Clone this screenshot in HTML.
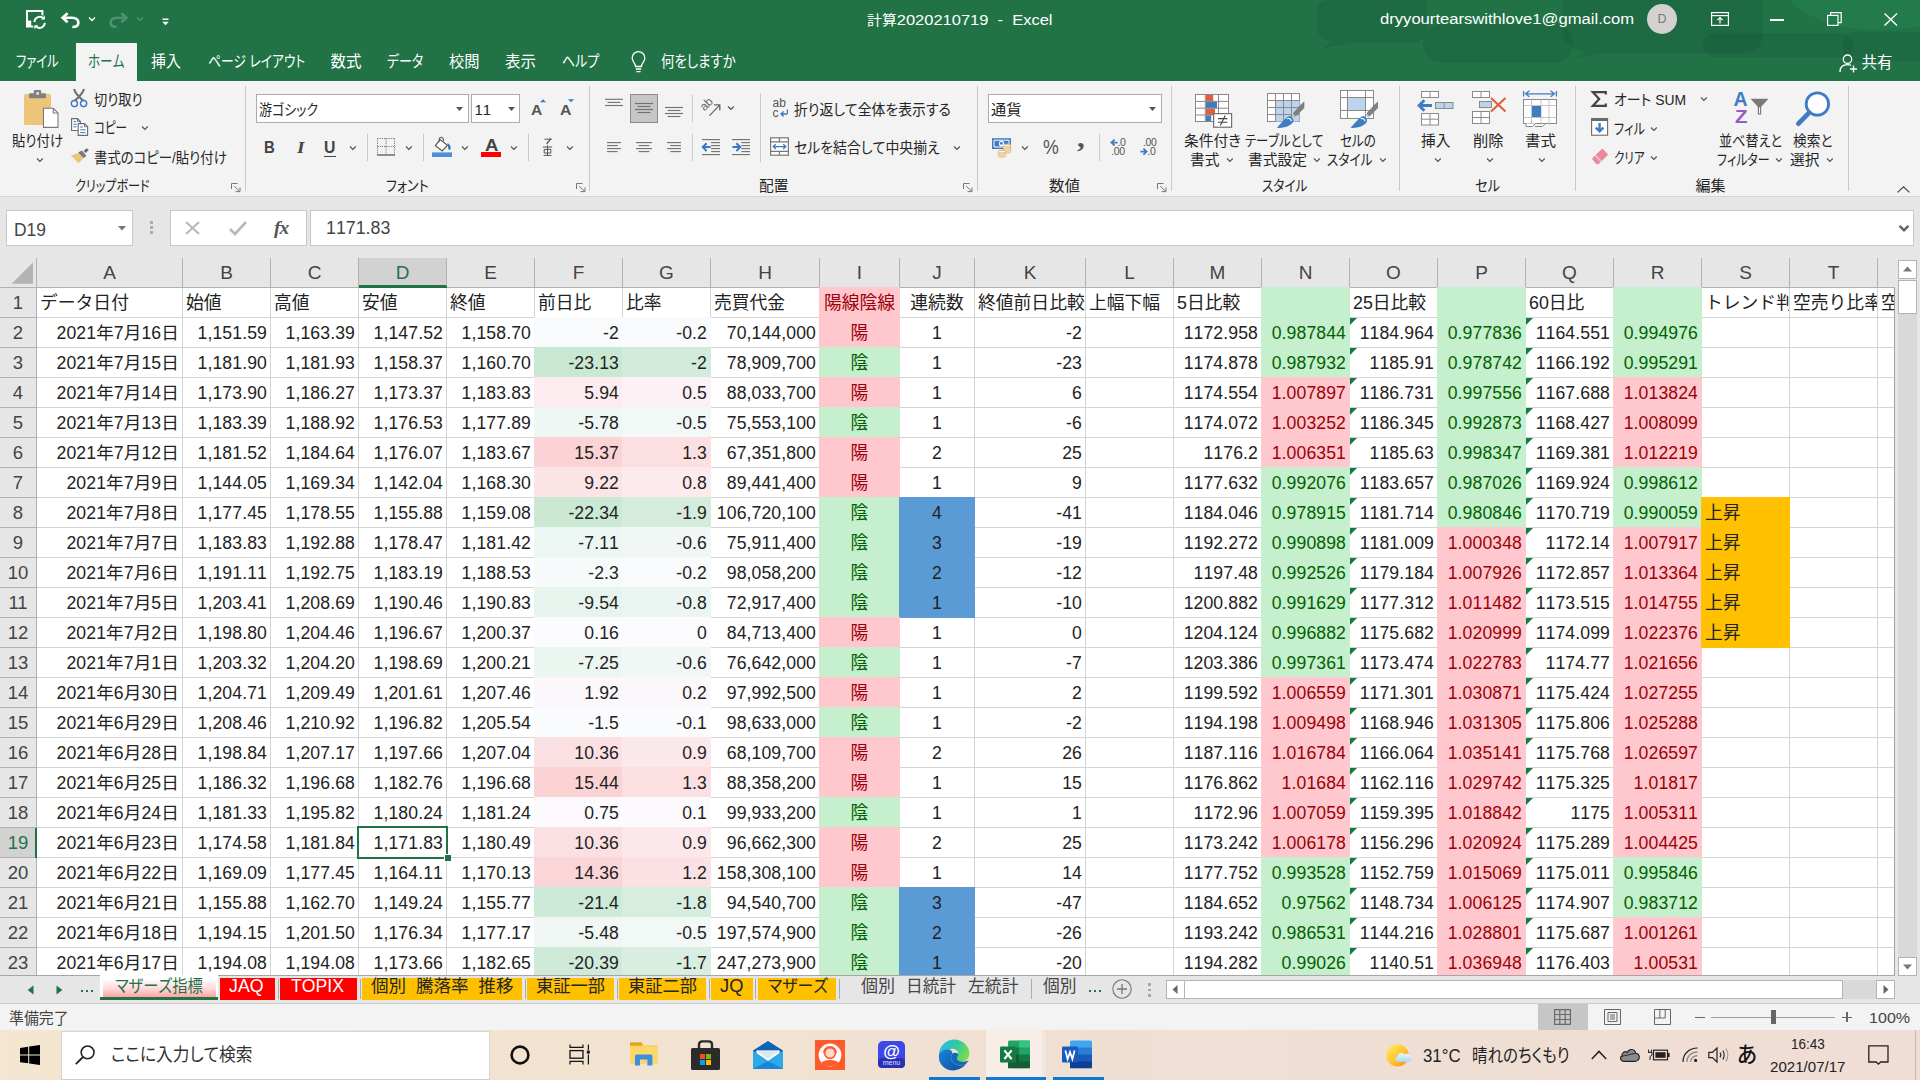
<!DOCTYPE html>
<html lang="ja"><head><meta charset="utf-8"><title>計算2020210719 - Excel</title>
<style>
*{box-sizing:border-box;margin:0;padding:0}
html,body{width:1920px;height:1080px;overflow:hidden;background:#fff}
body{position:relative;font-family:"Liberation Sans","Noto Sans CJK JP",sans-serif;color:#262626}
.a{position:absolute}
.t{position:absolute;white-space:nowrap;transform-origin:0 50%;font-kerning:none;font-feature-settings:"palt"}
.c{position:absolute;white-space:nowrap;overflow:hidden;font-size:17.6px;line-height:31px;height:29px;letter-spacing:0.12px;color:#222;font-kerning:none}
.k{font-size:17.8px;letter-spacing:0}
.r{text-align:right;padding-right:3px}
.l{text-align:left;padding-left:3px}
.m{text-align:center}
.ch{position:absolute;top:258px;height:29px;line-height:29px;text-align:center;font-size:19px;color:#444;border-right:1px solid #b1b1b1}
.rh{position:absolute;left:0;width:36px;height:30px;line-height:29px;text-align:center;font-size:18.5px;color:#444;border-bottom:1px solid #b1b1b1}
.gr{color:#006100}
.rd{color:#9c0006}
svg{position:absolute;overflow:visible}
</style></head><body>
<div class="a" style="left:0px;top:0px;width:1920px;height:81px;background:#217346"></div>
<svg style="left:0;top:0" width="1920" height="81" viewBox="0 0 1920 81"><g fill="#18553a" fill-opacity="0.30"><path d="M1317 10Q1317 0 1332 0H1427V28Q1427 43 1408 43H1348L1322 49L1331 42Q1317 38 1317 28Z"/><rect x="1423" y="24" width="150" height="39" rx="19"/><path d="M1563 0H1763V34Q1763 53 1738 53H1602L1576 59L1586 51Q1563 47 1563 34Z"/><rect x="1703" y="33" width="150" height="24" rx="12"/><rect x="1843" y="32" width="90" height="29" rx="13"/></g><path d="M1790 0H1920V26Q1880 34 1840 26Q1810 20 1790 0Z" fill="#2c8c57" fill-opacity="0.28"/></svg>
<svg style="left:26px;top:10px" width="20" height="20" viewBox="0 0 20 20"><path d="M7.5 16.6H1V1H16.4V6.5" fill="none" stroke="#fff" stroke-width="2"/><rect x="1" y="10.6" width="4.2" height="6" fill="#fff"/><circle cx="13.6" cy="12.4" r="7.6" fill="#217346"/><path d="M8.4 12A5.3 5.3 0 0 1 17.6 8.6M18.8 12.8A5.3 5.3 0 0 1 9.6 16.2" fill="none" stroke="#fff" stroke-width="1.9"/><path d="M18.9 5.6V9.6H14.9ZM8.3 19.2V15.2H12.3Z" fill="#fff"/></svg>
<svg style="left:61px;top:12px" width="19" height="16" viewBox="0 0 19 16"><path d="M6.6 1.2L1.6 5.7L6.6 10.2" fill="none" stroke="#fff" stroke-width="2.6"/><path d="M2.4 5.7H11C15.4 5.7 17.4 8.2 17.4 10.7C17.4 13.4 15 15 11.4 15" fill="none" stroke="#fff" stroke-width="2.6"/></svg>
<svg style="left:89px;top:17.0px" width="6" height="4" viewBox="0 0 6 4"><path d="M0 0.5L3 3.5L6 0.5" fill="none" stroke="#fff" stroke-width="1.3"/></svg>
<svg style="left:109px;top:12px" width="19" height="16" viewBox="0 0 19 16"><path d="M12.4 1.2L17.4 5.7L12.4 10.2" fill="none" stroke="#4f9270" stroke-width="2.6"/><path d="M16.6 5.7H8C3.6 5.7 1.6 8.2 1.6 10.7C1.6 13.4 4 15 7.6 15" fill="none" stroke="#4f9270" stroke-width="2.6"/></svg>
<svg style="left:137px;top:17.0px" width="6" height="4" viewBox="0 0 6 4"><path d="M0 0.5L3 3.5L6 0.5" fill="none" stroke="#4f9270" stroke-width="1.3"/></svg>
<svg style="left:162px;top:18px" width="7" height="8" viewBox="0 0 7 8"><path d="M0.5 1.2H6.5" stroke="#fff" stroke-width="1.5"/><path d="M0.3 3.8H6.7L3.5 7.2Z" fill="#fff"/></svg>
<span class="t" id="t1" style="left:866.5px;top:9.0px;font-size:15.5px;line-height:22px;color:#ffffff;transform:scaleX(1.0629);"><span style="font-size:14px">計算</span>2020210719&nbsp;&nbsp;-&nbsp;&nbsp;Excel</span>
<span class="t" id="t2" style="left:1379.5px;top:8.0px;font-size:15.5px;line-height:22px;color:#ffffff;transform:scaleX(1.0717);">dryyourtearswithlove1@gmail.com</span>
<div class="a" style="left:1647px;top:4px;width:30px;height:30px;background:#d4d2d0;border-radius:15px"></div>
<span class="t" id="t3" style="left:1657.5px;top:10.0px;font-size:12.5px;line-height:18px;color:#777;transform:scaleX(1.0000);">D</span>
<svg style="left:1711px;top:12px" width="18" height="14" viewBox="0 0 18 14"><rect x="0.6" y="0.6" width="16.8" height="12.8" fill="none" stroke="#fff" stroke-width="1.2"/><path d="M0.6 3.6H17.4" stroke="#fff" stroke-width="1.2"/><path d="M9 11.5V6M6.4 8.2L9 5.6L11.6 8.2" fill="none" stroke="#fff" stroke-width="1.2"/></svg>
<div class="a" style="left:1770px;top:19px;width:14px;height:1.5px;background:#fff"></div>
<svg style="left:1827px;top:12px" width="15" height="14" viewBox="0 0 15 14"><rect x="0.6" y="3.4" width="10.4" height="10" fill="none" stroke="#fff" stroke-width="1.2"/><path d="M3.6 3.4V0.6H14.2V10.6H11" fill="none" stroke="#fff" stroke-width="1.2"/></svg>
<svg style="left:1884px;top:13px" width="14" height="13" viewBox="0 0 14 13"><path d="M0.5 0.5L13 12.5M13 0.5L0.5 12.5" stroke="#fff" stroke-width="1.4" fill="none"/></svg>
<div class="a" style="left:76px;top:43px;width:61px;height:38px;background:#f3f3f3"></div>
<span class="t" id="t4" style="left:15.5px;top:51.0px;font-size:15.5px;line-height:22px;color:#ffffff;transform:scaleX(0.7963);">ファイル</span>
<span class="t" id="t5" style="left:87.5px;top:51.0px;font-size:15.5px;line-height:22px;color:#217346;transform:scaleX(0.8111);">ホーム</span>
<span class="t" id="t6" style="left:150.5px;top:51.0px;font-size:15.5px;line-height:22px;color:#ffffff;transform:scaleX(0.9677);">挿入</span>
<span class="t" id="t7" style="left:207.5px;top:51.0px;font-size:15.5px;line-height:22px;color:#ffffff;transform:scaleX(0.8220);">ページ レイアウト</span>
<span class="t" id="t8" style="left:330.5px;top:51.0px;font-size:15.5px;line-height:22px;color:#ffffff;transform:scaleX(1.0000);">数式</span>
<span class="t" id="t9" style="left:387.0px;top:51.0px;font-size:15.5px;line-height:22px;color:#ffffff;transform:scaleX(0.8372);">データ</span>
<span class="t" id="t10" style="left:448.5px;top:51.0px;font-size:15.5px;line-height:22px;color:#ffffff;transform:scaleX(0.9839);">校閲</span>
<span class="t" id="t11" style="left:505.0px;top:51.0px;font-size:15.5px;line-height:22px;color:#ffffff;transform:scaleX(1.0000);">表示</span>
<span class="t" id="t12" style="left:562.0px;top:51.0px;font-size:15.5px;line-height:22px;color:#ffffff;transform:scaleX(0.8409);">ヘルプ</span>
<svg style="left:631px;top:51px" width="15" height="22" viewBox="0 0 15 22"><path d="M4.6 15.5C4.6 12.5 1.2 11 1.2 7A6.3 6.3 0 0 1 13.8 7C13.8 11 10.4 12.5 10.4 15.5Z" fill="none" stroke="#fff" stroke-width="1.3"/><path d="M4.8 18H10.2M5.4 20.6H9.6" stroke="#fff" stroke-width="1.3"/></svg>
<span class="t" id="t13" style="left:661.0px;top:51.0px;font-size:15.5px;line-height:22px;color:#ffffff;transform:scaleX(0.8663);">何をしますか</span>
<svg style="left:1839px;top:54px" width="19" height="19" viewBox="0 0 19 19"><circle cx="8.5" cy="5.2" r="4.2" fill="none" stroke="#fff" stroke-width="1.3"/><path d="M1 18C1 12.5 4.5 10.6 8.5 10.6C10 10.6 11 10.8 12 11.3" fill="none" stroke="#fff" stroke-width="1.3"/><path d="M14.5 11.5V18.5M11 15H18" stroke="#fff" stroke-width="1.3"/></svg>
<span class="t" id="t14" style="left:1861.5px;top:52.0px;font-size:15.5px;line-height:22px;color:#ffffff;transform:scaleX(1.0000);">共有</span>
<div class="a" style="left:0px;top:81px;width:1920px;height:116px;background:#f3f3f3;border-bottom:1px solid #d6d6d6"></div>
<svg style="left:24px;top:89px" width="35" height="39" viewBox="0 0 35 39"><rect x="0" y="5" width="27" height="31" rx="1.5" fill="#edc579"/><rect x="5" y="4.2" width="17" height="5" rx="1" fill="#808080"/><rect x="9.8" y="1" width="7.4" height="5" rx="1.2" fill="#808080"/><rect x="12.4" y="3.3" width="2.4" height="2.4" fill="#f3f3f3"/><path d="M19.5 19.3H29.3L34 24V38.4H19.5Z" fill="#fff" stroke="#7a7a7a" stroke-width="1.1"/><path d="M29.3 19.3V24H34" fill="none" stroke="#7a7a7a" stroke-width="1.1"/></svg>
<span class="t" id="t15" style="left:12.0px;top:131.0px;font-size:15px;line-height:20px;color:#262626;transform:scaleX(0.8947);">貼り付け</span>
<svg style="left:37.1px;top:157.55px" width="5.8" height="3.9" viewBox="0 0 5.8 3.9"><path d="M0 0.5L2.9 3.4L5.8 0.5" fill="none" stroke="#505050" stroke-width="1.1"/></svg>
<svg style="left:70px;top:88px" width="18" height="20" viewBox="0 0 18 20"><path d="M4.1 1C5 5 7.2 7.4 13.2 12.6M14 1C13 5 10.8 7.4 4.8 12.6" stroke="#707070" stroke-width="2.1" fill="none"/><circle cx="4.4" cy="15.6" r="3.1" fill="none" stroke="#3a78c3" stroke-width="1.4"/><circle cx="13.6" cy="15.6" r="3.1" fill="none" stroke="#3a78c3" stroke-width="1.4"/></svg>
<span class="t" id="t16" style="left:94.0px;top:90.0px;font-size:15px;line-height:20px;color:#262626;transform:scaleX(0.8818);">切り取り</span>
<svg style="left:71px;top:118px" width="18" height="18" viewBox="0 0 18 18"><path d="M0.6 0.6H6.5L9.4 3.5V12.5H0.6Z" fill="#fff" stroke="#6a6a6a" stroke-width="1.1"/><path d="M6.5 0.6V3.5H9.4" fill="none" stroke="#6a6a6a" stroke-width="0.9"/><path d="M2.4 3.6H5M2.4 6.2H5.6M2.4 8.8H5.6" stroke="#3a78c3" stroke-width="1"/><path d="M7.2 5.6H13.5L16.6 8.7V17.4H7.2Z" fill="#fff" stroke="#6a6a6a" stroke-width="1.1"/><path d="M13.5 5.6V8.7H16.6" fill="none" stroke="#6a6a6a" stroke-width="0.9"/><path d="M9.2 9H12M9.2 11.8H14.6M9.2 14.6H14.6" stroke="#3a78c3" stroke-width="1"/></svg>
<span class="t" id="t17" style="left:93.5px;top:118.0px;font-size:15px;line-height:20px;color:#262626;transform:scaleX(0.7674);">コピー</span>
<svg style="left:142.1px;top:125.55px" width="5.8" height="3.9" viewBox="0 0 5.8 3.9"><path d="M0 0.5L2.9 3.4L5.8 0.5" fill="none" stroke="#505050" stroke-width="1.1"/></svg>
<svg style="left:70px;top:148px" width="20" height="16" viewBox="0 0 20 16"><path d="M0.9 7.5L8.5 4.9L13.2 10.4L8.6 15.3Z" fill="#edc579"/><path d="M8 4.5L12 2.5L16.4 7.7L13.6 10.2Z" fill="#7a7a7a"/><path d="M13.6 2.7L16.8 0.3L18.8 2L15.6 5.1Z" fill="#6a6a6a"/></svg>
<span class="t" id="t18" style="left:94.0px;top:148.0px;font-size:15px;line-height:20px;color:#262626;transform:scaleX(0.8926);">書式のコピー/貼り付け</span>
<span class="t" id="t19" style="left:74.5px;top:176.0px;font-size:15px;line-height:20px;color:#262626;transform:scaleX(0.8065);">クリップボード</span>
<svg style="left:231px;top:183px" width="10" height="9" viewBox="0 0 10 9"><path d="M0.5 6V0.5H6.5" fill="none" stroke="#777" stroke-width="1"/><path d="M3.2 3.2L8.6 8.2M9 4.4V8.6H4.6" fill="none" stroke="#777" stroke-width="1"/></svg>
<div class="a" style="left:245px;top:86px;width:1px;height:105px;background:#c9c9c9"></div>
<div class="a" style="left:256px;top:94px;width:213px;height:29px;background:#fff;border:1px solid #ababab"></div>
<span class="t" id="t20" style="left:258.5px;top:100.0px;font-size:15px;line-height:20px;color:#262626;transform:scaleX(0.8676);">游ゴシック</span>
<svg style="left:456px;top:107px" width="7" height="4" viewBox="0 0 7 4"><path d="M0 0H7L3.5 4Z" fill="#555"/></svg>
<div class="a" style="left:471px;top:94px;width:49px;height:29px;background:#fff;border:1px solid #ababab"></div>
<span class="t" id="t21" style="left:474.5px;top:100.0px;font-size:15px;line-height:20px;color:#262626;transform:scaleX(1.0000);">11</span>
<svg style="left:508px;top:107px" width="7" height="4" viewBox="0 0 7 4"><path d="M0 0H7L3.5 4Z" fill="#555"/></svg>
<span class="t" id="t22" style="left:530.5px;top:100.0px;font-size:14.8px;line-height:20px;color:#555;transform:scaleX(1.0545);font-weight:bold;">A</span>
<svg style="left:539.6px;top:99px" width="6" height="3.4" viewBox="0 0 6 3.4"><path d="M0 3.2L3 0.2L6 3.2Z" fill="#3a78c3"/></svg>
<span class="t" id="t23" style="left:559.5px;top:100.0px;font-size:14.8px;line-height:20px;color:#555;transform:scaleX(1.0727);font-weight:bold;">A</span>
<svg style="left:567.6px;top:99.2px" width="6" height="3.4" viewBox="0 0 6 3.4"><path d="M0 0.2L3 3.2L6 0.2Z" fill="#3a78c3"/></svg>
<span class="t" id="t24" style="left:264.0px;top:136.0px;font-size:17px;line-height:24px;color:#444;transform:scaleX(0.8750);font-weight:bold;">B</span>
<span class="t" id="t25" style="left:296.5px;top:136.0px;font-size:17px;line-height:24px;color:#444;transform:scaleX(1.1429);font-weight:bold;font-style:italic;font-family:'Liberation Serif',serif;">I</span>
<span class="t" id="t26" style="left:324.0px;top:135.0px;font-size:16.5px;line-height:24px;color:#444;transform:scaleX(0.9583);font-weight:bold;">U</span>
<div class="a" style="left:324px;top:156px;width:11.5px;height:1.4px;background:#444"></div>
<svg style="left:350.1px;top:145.55px" width="5.8" height="3.9" viewBox="0 0 5.8 3.9"><path d="M0 0.5L2.9 3.4L5.8 0.5" fill="none" stroke="#505050" stroke-width="1.1"/></svg>
<div class="a" style="left:367px;top:134px;width:1px;height:27px;background:#c9c9c9"></div>
<svg style="left:377px;top:138px" width="18" height="18" viewBox="0 0 18 18"><path d="M0.5 0.5H17.5M0.5 0.5V16.5M17.5 0.5V16.5M9 0.5V16.5M0.5 8.5H17.5" fill="none" stroke="#666" stroke-width="1" stroke-dasharray="1 1.2"/><path d="M0 17H18" stroke="#555" stroke-width="1.3"/></svg>
<svg style="left:406.1px;top:145.55px" width="5.8" height="3.9" viewBox="0 0 5.8 3.9"><path d="M0 0.5L2.9 3.4L5.8 0.5" fill="none" stroke="#505050" stroke-width="1.1"/></svg>
<div class="a" style="left:423px;top:134px;width:1px;height:27px;background:#c9c9c9"></div>
<svg style="left:432px;top:136px" width="21" height="21" viewBox="0 0 21 21"><path d="M8.2 3.6L15.4 9.4L10.2 15L3.4 9.6Z" fill="#fff" stroke="#555" stroke-width="1.2"/><path d="M7.6 5.4C6.6 3.4 7.4 1 9.4 1.2C11 1.4 11.6 3 11.4 5.2" fill="none" stroke="#555" stroke-width="1.1"/><path d="M15.4 7C17.8 8.2 19.2 10.6 18.6 13C18 14.6 16.4 14.2 16.2 12.6C16 10.8 16 9 15.4 7Z" fill="#3a78c3"/><rect x="0" y="16.4" width="20" height="4.6" fill="#4a90d9"/></svg>
<svg style="left:462.1px;top:145.55px" width="5.8" height="3.9" viewBox="0 0 5.8 3.9"><path d="M0 0.5L2.9 3.4L5.8 0.5" fill="none" stroke="#505050" stroke-width="1.1"/></svg>
<span class="t" id="t27" style="left:484.5px;top:133.0px;font-size:16.5px;line-height:24px;color:#444;transform:scaleX(1.1250);font-weight:bold;">A</span>
<div class="a" style="left:481px;top:152px;width:20px;height:4.6px;background:#ff0000"></div>
<svg style="left:511.1px;top:145.55px" width="5.8" height="3.9" viewBox="0 0 5.8 3.9"><path d="M0 0.5L2.9 3.4L5.8 0.5" fill="none" stroke="#505050" stroke-width="1.1"/></svg>
<div class="a" style="left:528px;top:134px;width:1px;height:27px;background:#c9c9c9"></div>
<svg style="left:542px;top:138px" width="11" height="18" viewBox="0 0 11 18"><path d="M2.5 1.2H8.6L4.6 6.2M5.6 3.4V5" fill="none" stroke="#555" stroke-width="1.1"/><path d="M7.6 0.2L9.6 1.4" stroke="#555" stroke-width="1"/><path d="M0.8 9H10.2M1.6 17.4H9.4M5.5 7.4V17.4M2.2 11.4H8.8V15H2.2Z" fill="none" stroke="#555" stroke-width="1"/></svg>
<svg style="left:567.1px;top:145.55px" width="5.8" height="3.9" viewBox="0 0 5.8 3.9"><path d="M0 0.5L2.9 3.4L5.8 0.5" fill="none" stroke="#505050" stroke-width="1.1"/></svg>
<span class="t" id="t28" style="left:386.0px;top:176.0px;font-size:15px;line-height:20px;color:#262626;transform:scaleX(0.8673);">フォント</span>
<svg style="left:575.5px;top:183px" width="10" height="9" viewBox="0 0 10 9"><path d="M0.5 6V0.5H6.5" fill="none" stroke="#777" stroke-width="1"/><path d="M3.2 3.2L8.6 8.2M9 4.4V8.6H4.6" fill="none" stroke="#777" stroke-width="1"/></svg>
<div class="a" style="left:589px;top:86px;width:1px;height:105px;background:#c9c9c9"></div>
<svg style="left:0;top:0" width="800" height="170" viewBox="0 0 800 170"><rect x="605" y="98.75" width="18" height="1.1" fill="#707070"/><rect x="607.6" y="101.85000000000001" width="12.799999999999955" height="1.1" fill="#707070"/><rect x="605" y="104.95" width="18" height="1.1" fill="#707070"/><rect x="630.5" y="94.5" width="27" height="28" fill="#c6c6c6" stroke="#8c8c8c" stroke-width="1"/><rect x="635" y="102.95" width="18" height="1.1" fill="#707070"/><rect x="637.6" y="105.95" width="12.799999999999955" height="1.1" fill="#707070"/><rect x="635" y="108.95" width="18" height="1.1" fill="#707070"/><rect x="637.6" y="111.95" width="12.799999999999955" height="1.1" fill="#707070"/><rect x="665" y="106.95" width="18" height="1.1" fill="#707070"/><rect x="667.6" y="109.95" width="12.799999999999955" height="1.1" fill="#707070"/><rect x="665" y="112.95" width="18" height="1.1" fill="#707070"/><rect x="667.6" y="115.95" width="12.799999999999955" height="1.1" fill="#707070"/><rect x="607" y="142.04999999999998" width="14" height="1.1" fill="#707070"/><rect x="607" y="145.04999999999998" width="10.700000000000045" height="1.1" fill="#707070"/><rect x="607" y="148.04999999999998" width="14" height="1.1" fill="#707070"/><rect x="607" y="151.04999999999998" width="10.700000000000045" height="1.1" fill="#707070"/><rect x="636" y="142.04999999999998" width="16" height="1.1" fill="#707070"/><rect x="638.6" y="145.04999999999998" width="10.799999999999955" height="1.1" fill="#707070"/><rect x="636" y="148.04999999999998" width="16" height="1.1" fill="#707070"/><rect x="638.6" y="151.04999999999998" width="10.799999999999955" height="1.1" fill="#707070"/><rect x="667" y="142.04999999999998" width="14" height="1.1" fill="#707070"/><rect x="670.3" y="145.04999999999998" width="10.700000000000045" height="1.1" fill="#707070"/><rect x="667" y="148.04999999999998" width="14" height="1.1" fill="#707070"/><rect x="670.3" y="151.04999999999998" width="10.700000000000045" height="1.1" fill="#707070"/><rect x="702" y="139.04999999999998" width="18" height="1.1" fill="#707070"/><rect x="702" y="154.04999999999998" width="18" height="1.1" fill="#707070"/><rect x="711" y="142.04999999999998" width="9" height="1.1" fill="#707070"/><rect x="711" y="145.04999999999998" width="9" height="1.1" fill="#707070"/><rect x="711" y="148.04999999999998" width="9" height="1.1" fill="#707070"/><rect x="711" y="151.04999999999998" width="9" height="1.1" fill="#707070"/><path d="M710.6 147.1H703.4M706.6 143.2L702.8 147.1L706.6 151" fill="none" stroke="#3a78c3" stroke-width="2"/><rect x="732" y="139.04999999999998" width="18" height="1.1" fill="#707070"/><rect x="732" y="154.04999999999998" width="18" height="1.1" fill="#707070"/><rect x="741.3" y="142.04999999999998" width="8.700000000000045" height="1.1" fill="#707070"/><rect x="741.3" y="145.04999999999998" width="8.700000000000045" height="1.1" fill="#707070"/><rect x="741.3" y="148.04999999999998" width="8.700000000000045" height="1.1" fill="#707070"/><rect x="741.3" y="151.04999999999998" width="8.700000000000045" height="1.1" fill="#707070"/><path d="M732.4 147.1H739.6M736.4 143.2L740.2 147.1L736.4 151" fill="none" stroke="#3a78c3" stroke-width="2"/><text x="0" y="0" font-size="12" fill="#666" font-family="Liberation Sans,sans-serif" transform="translate(704.4 111.6) rotate(-45)">ab</text><path d="M709.5 115.6L719.4 105.4M714 104.8H719.8V110.6" fill="none" stroke="#666" stroke-width="1.3"/><rect x="770.6" y="137.8" width="17.8" height="17.4" fill="#fff" stroke="#777" stroke-width="1.2"/><path d="M770.6 141.8H788.4M770.6 151.4H788.4M779.5 137.8V141.8M779.5 151.4V155.2" stroke="#777" stroke-width="1.2" fill="none"/><path d="M773.4 146.6H785.6M775.8 144.2L773.2 146.6L775.8 149M783.2 144.2L785.8 146.6L783.2 149" fill="none" stroke="#3a78c3" stroke-width="1.3"/><path d="M787.4 109.6V112.8C787.4 113.6 787 114 786.2 114H781.4M783.6 111.6L781 114L783.6 116.4" fill="none" stroke="#3a78c3" stroke-width="1.3"/></svg>
<div class="a" style="left:692px;top:95px;width:1px;height:27px;background:#c9c9c9"></div>
<svg style="left:728.1px;top:106.05px" width="5.8" height="3.9" viewBox="0 0 5.8 3.9"><path d="M0 0.5L2.9 3.4L5.8 0.5" fill="none" stroke="#505050" stroke-width="1.1"/></svg>
<div class="a" style="left:760px;top:93px;width:1px;height:69px;background:#c9c9c9"></div>
<span class="t" style="left:772.4px;top:97.3px;font-size:12px;line-height:12px;color:#555;letter-spacing:0.3px">ab</span>
<span class="t" style="left:772.4px;top:106.5px;font-size:12px;line-height:12px;color:#555">c</span>
<div class="a" style="left:692px;top:134px;width:1px;height:27px;background:#c9c9c9"></div>
<span class="t" id="t29" style="left:794.0px;top:100.0px;font-size:15px;line-height:20px;color:#262626;transform:scaleX(0.9235);">折り返して全体を表示する</span>
<span class="t" id="t30" style="left:794.0px;top:138.0px;font-size:15px;line-height:20px;color:#262626;transform:scaleX(0.9268);">セルを結合して中央揃え</span>
<svg style="left:954.1px;top:145.55px" width="5.8" height="3.9" viewBox="0 0 5.8 3.9"><path d="M0 0.5L2.9 3.4L5.8 0.5" fill="none" stroke="#505050" stroke-width="1.1"/></svg>
<span class="t" id="t31" style="left:758.5px;top:176.0px;font-size:15px;line-height:20px;color:#262626;transform:scaleX(0.9833);">配置</span>
<svg style="left:963px;top:183px" width="10" height="9" viewBox="0 0 10 9"><path d="M0.5 6V0.5H6.5" fill="none" stroke="#777" stroke-width="1"/><path d="M3.2 3.2L8.6 8.2M9 4.4V8.6H4.6" fill="none" stroke="#777" stroke-width="1"/></svg>
<div class="a" style="left:977px;top:86px;width:1px;height:105px;background:#c9c9c9"></div>
<div class="a" style="left:988px;top:94px;width:174px;height:29px;background:#fff;border:1px solid #ababab"></div>
<span class="t" id="t32" style="left:990.5px;top:100.0px;font-size:15px;line-height:20px;color:#262626;transform:scaleX(1.0167);">通貨</span>
<svg style="left:1149px;top:107px" width="7" height="4" viewBox="0 0 7 4"><path d="M0 0H7L3.5 4Z" fill="#555"/></svg>
<svg style="left:992px;top:138px" width="20" height="20" viewBox="0 0 20 20"><rect x="0" y="0.2" width="19" height="10.8" fill="#3f7cc4"/><path d="M2 2.2H17V9H2Z" fill="none" stroke="#fff" stroke-width="1"/><ellipse cx="9.5" cy="5.6" rx="2.6" ry="2.9" fill="#fff"/><ellipse cx="9.3" cy="5.2" rx="1.4" ry="1.5" fill="#3f7cc4"/><g fill="#f3f3f3" stroke="#e4b45e" stroke-width="1"><ellipse cx="15" cy="13.6" rx="3.9" ry="1.5"/><ellipse cx="15" cy="11.6" rx="3.9" ry="1.5"/><ellipse cx="15" cy="9.6" rx="3.9" ry="1.5"/><ellipse cx="15" cy="7.6" rx="3.9" ry="1.5"/><ellipse cx="10" cy="17.6" rx="3.9" ry="1.5"/><ellipse cx="10" cy="15.6" rx="3.9" ry="1.5"/><ellipse cx="10" cy="13.6" rx="3.9" ry="1.5"/></g></svg>
<svg style="left:1022.1px;top:145.55px" width="5.8" height="3.9" viewBox="0 0 5.8 3.9"><path d="M0 0.5L2.9 3.4L5.8 0.5" fill="none" stroke="#505050" stroke-width="1.1"/></svg>
<span class="t" id="t33" style="left:1042.5px;top:133.0px;font-size:20px;line-height:28px;color:#555;transform:scaleX(0.8889);">%</span>
<span class="t" id="t34" style="left:1076.5px;top:119.0px;font-size:27px;line-height:38px;color:#555;transform:scaleX(1.1429);font-family:'Liberation Serif',serif;font-weight:bold;">,</span>
<div class="a" style="left:1099px;top:134px;width:1px;height:27px;background:#c9c9c9"></div>
<svg style="left:1110px;top:138px" width="17" height="18" viewBox="0 0 17 18"><path d="M7.6 4.6H1.8M4.6 1.6L1.4 4.6L4.6 7.6" fill="none" stroke="#3f7cc4" stroke-width="1.8"/><text x="7.6" y="8.4" font-size="10.5" fill="#555" font-family="Liberation Sans,sans-serif" letter-spacing="-0.4">.0</text><text x="1.2" y="17.4" font-size="10.5" fill="#555" font-family="Liberation Sans,sans-serif" letter-spacing="-0.4">.00</text></svg>
<svg style="left:1140px;top:138px" width="17" height="18" viewBox="0 0 17 18"><text x="3" y="8.4" font-size="10.5" fill="#555" font-family="Liberation Sans,sans-serif" letter-spacing="-0.4">.00</text><path d="M0.4 13.6H6.2M3.4 10.6L6.6 13.6L3.4 16.6" fill="none" stroke="#3f7cc4" stroke-width="1.8"/><text x="7.6" y="17.4" font-size="10.5" fill="#555" font-family="Liberation Sans,sans-serif" letter-spacing="-0.4">.0</text></svg>
<span class="t" id="t35" style="left:1048.5px;top:176.0px;font-size:15px;line-height:20px;color:#262626;transform:scaleX(1.0333);">数値</span>
<svg style="left:1157px;top:183px" width="10" height="9" viewBox="0 0 10 9"><path d="M0.5 6V0.5H6.5" fill="none" stroke="#777" stroke-width="1"/><path d="M3.2 3.2L8.6 8.2M9 4.4V8.6H4.6" fill="none" stroke="#777" stroke-width="1"/></svg>
<div class="a" style="left:1171px;top:86px;width:1px;height:105px;background:#c9c9c9"></div>
<svg style="left:0;top:0" width="1400" height="170" viewBox="0 0 1400 170"><rect x="1195.5" y="94.5" width="33" height="27" fill="#fff" stroke="#8a8a8a"/><rect x="1205.8" y="95" width="7.4" height="6.4" fill="#e0603c"/><rect x="1205.8" y="101.8" width="11.2" height="6.4" fill="#3f7cc4"/><rect x="1205.8" y="108.6" width="9.2" height="6.4" fill="#e0603c"/><rect x="1205.8" y="115.4" width="5.4" height="5.8" fill="#3f7cc4"/><path d="M1195.5 101.4H1228.5M1195.5 108.2H1228.5M1195.5 115H1228.5M1205.3 94.5V121.5M1218.5 94.5V121.5" stroke="#8a8a8a" fill="none"/><rect x="1213.6" y="113.6" width="18" height="13.6" fill="#fff" stroke="#707070" stroke-width="1.2"/><path d="M1218 118.6H1227.4M1218 122.2H1227.4M1225.2 115.6L1220.4 125.4" stroke="#444" stroke-width="1.1" fill="none"/><rect x="1267.5" y="93.5" width="32" height="28" fill="#fff" stroke="#8a8a8a"/><rect x="1275.5" y="100.5" width="24" height="21" fill="#bdd3ee"/><path d="M1267.5 100.5H1299.5M1267.5 107.5H1299.5M1267.5 114.5H1299.5M1275.5 93.5V121.5M1283.5 93.5V121.5M1291.5 93.5V121.5" stroke="#8a8a8a" fill="none"/><g transform="translate(1304.3 101.5)"><path d="M0 0V6.5L-9.5 16L-12.5 13L-3.5 3Z" fill="#808080"/><path d="M-12.6 11.6L-8.2 16" stroke="#f3f3f3" stroke-width="1"/><path d="M-15 14.6C-19 16 -22 21 -27.5 26.3C-21 26.8 -14 25.2 -11.3 20.6C-10.6 19 -10.9 17.4 -12 16.4C-13 15.2 -14 14.6 -15 14.6Z" fill="#3f7cc4"/><path d="M-17.2 17.2C-15.4 16.2 -13.4 17.4 -13 19.6" fill="none" stroke="#fff" stroke-width="1.3"/></g><rect x="1340.5" y="90.5" width="33" height="28" fill="#fff" stroke="#8a8a8a"/><rect x="1347.5" y="97.5" width="18" height="13" fill="#bdd3ee"/><path d="M1340.5 97.5H1373.5M1340.5 110.5H1373.5M1347.5 90.5V118.5M1365.5 90.5V118.5" stroke="#8a8a8a" fill="none"/><g transform="translate(1378 101.5)"><path d="M0 0V6.5L-9.5 16L-12.5 13L-3.5 3Z" fill="#808080"/><path d="M-12.6 11.6L-8.2 16" stroke="#f3f3f3" stroke-width="1"/><path d="M-15 14.6C-19 16 -22 21 -27.5 26.3C-21 26.8 -14 25.2 -11.3 20.6C-10.6 19 -10.9 17.4 -12 16.4C-13 15.2 -14 14.6 -15 14.6Z" fill="#3f7cc4"/><path d="M-17.2 17.2C-15.4 16.2 -13.4 17.4 -13 19.6" fill="none" stroke="#fff" stroke-width="1.3"/></g></svg>
<span class="t" id="t36" style="left:1183.5px;top:131.0px;font-size:15px;line-height:20px;color:#262626;transform:scaleX(0.9828);">条件付き</span>
<span class="t" id="t37" style="left:1190.0px;top:150.0px;font-size:15px;line-height:20px;color:#262626;transform:scaleX(0.9833);">書式</span>
<svg style="left:1227.1px;top:158.05px" width="5.8" height="3.9" viewBox="0 0 5.8 3.9"><path d="M0 0.5L2.9 3.4L5.8 0.5" fill="none" stroke="#505050" stroke-width="1.1"/></svg>
<span class="t" id="t38" style="left:1244.5px;top:131.0px;font-size:15px;line-height:20px;color:#262626;transform:scaleX(0.8211);">テーブルとして</span>
<span class="t" id="t39" style="left:1247.5px;top:150.0px;font-size:15px;line-height:20px;color:#262626;transform:scaleX(0.9833);">書式設定</span>
<svg style="left:1314.1px;top:158.05px" width="5.8" height="3.9" viewBox="0 0 5.8 3.9"><path d="M0 0.5L2.9 3.4L5.8 0.5" fill="none" stroke="#505050" stroke-width="1.1"/></svg>
<span class="t" id="t40" style="left:1340.0px;top:131.0px;font-size:15px;line-height:20px;color:#262626;transform:scaleX(0.8372);">セルの</span>
<span class="t" id="t41" style="left:1327.0px;top:150.0px;font-size:15px;line-height:20px;color:#262626;transform:scaleX(0.8426);">スタイル</span>
<svg style="left:1379.6px;top:158.05px" width="5.8" height="3.9" viewBox="0 0 5.8 3.9"><path d="M0 0.5L2.9 3.4L5.8 0.5" fill="none" stroke="#505050" stroke-width="1.1"/></svg>
<span class="t" id="t42" style="left:1262.0px;top:176.0px;font-size:15px;line-height:20px;color:#262626;transform:scaleX(0.8426);">スタイル</span>
<div class="a" style="left:1399px;top:86px;width:1px;height:105px;background:#c9c9c9"></div>
<svg style="left:1417px;top:91px" width="37" height="35" viewBox="0 0 37 35"><g fill="#fff" stroke="#8a8a8a" stroke-width="1"><rect x="4.5" y="0.5" width="17" height="6"/><path d="M13 0.5V6.5"/><rect x="4.5" y="22.5" width="17" height="11.5"/><path d="M13 22.5V34M4.5 28.2H21.5"/></g><rect x="18.5" y="11.5" width="17.5" height="6" fill="#bdd3ee" stroke="#8a8a8a" stroke-width="1"/><path d="M27.2 11.5V17.5" stroke="#8a8a8a"/><path d="M15 14.5H2.4M7.4 9.2L2 14.5L7.4 19.8" fill="none" stroke="#3f7cc4" stroke-width="2.8"/></svg>
<span class="t" id="t43" style="left:1421.1px;top:131.0px;font-size:15px;line-height:20px;color:#262626;transform:scaleX(0.9800);">挿入</span>
<svg style="left:1434.6999999999998px;top:158.05px" width="5.8" height="3.9" viewBox="0 0 5.8 3.9"><path d="M0 0.5L2.9 3.4L5.8 0.5" fill="none" stroke="#505050" stroke-width="1.1"/></svg>
<svg style="left:1472px;top:91px" width="36" height="35" viewBox="0 0 36 35"><g fill="#fff" stroke="#8a8a8a" stroke-width="1"><rect x="0.5" y="0.5" width="17" height="6"/><path d="M9 0.5V6.5"/><rect x="0.5" y="20.5" width="17" height="12"/><path d="M9 20.5V32.5M0.5 26.5H17.5"/></g><rect x="7.5" y="10.5" width="12" height="6" fill="#bdd3ee" stroke="#8a8a8a" stroke-width="1"/><path d="M19 7L33.5 20.5M33.5 7L19 20.5" stroke="#e0603c" stroke-width="2.2" fill="none"/></svg>
<span class="t" id="t44" style="left:1472.5px;top:131.0px;font-size:15px;line-height:20px;color:#262626;transform:scaleX(1.0200);">削除</span>
<svg style="left:1486.8px;top:158.05px" width="5.8" height="3.9" viewBox="0 0 5.8 3.9"><path d="M0 0.5L2.9 3.4L5.8 0.5" fill="none" stroke="#505050" stroke-width="1.1"/></svg>
<svg style="left:1523px;top:90px" width="35" height="37" viewBox="0 0 35 37"><path d="M0.6 1V6.6M33.4 1V6.6M3 3.8H31M6.4 0.8L2.6 3.8L6.4 6.8M27.6 0.8L31.4 3.8L27.6 6.8" fill="none" stroke="#3f7cc4" stroke-width="1.3"/><rect x="0.5" y="9.5" width="33" height="24" fill="#fff" stroke="#8a8a8a" stroke-width="1"/><path d="M0.5 15.5H33.5M0.5 27.5H33.5M8.5 9.5V33.5M18 9.5V33.5M26 9.5V33.5" stroke="#c4c4c4" stroke-width="1" fill="none"/><rect x="9" y="16" width="9" height="11" fill="#3f7cc4"/><path d="M3 33.5V36.5H9.5L12.5 33.5M12 36.5H19.5L22.5 33.5" fill="#fff" stroke="#8a8a8a" stroke-width="1"/></svg>
<span class="t" id="t45" style="left:1524.5px;top:131.0px;font-size:15px;line-height:20px;color:#262626;transform:scaleX(1.0333);">書式</span>
<svg style="left:1538.8px;top:158.05px" width="5.8" height="3.9" viewBox="0 0 5.8 3.9"><path d="M0 0.5L2.9 3.4L5.8 0.5" fill="none" stroke="#505050" stroke-width="1.1"/></svg>
<span class="t" id="t46" style="left:1474.5px;top:176.0px;font-size:15px;line-height:20px;color:#262626;transform:scaleX(0.8821);">セル</span>
<div class="a" style="left:1575px;top:86px;width:1px;height:105px;background:#c9c9c9"></div>
<svg style="left:1591px;top:91px" width="17" height="16" viewBox="0 0 17 16"><path d="M14.8 3.4V1.1H1.8L8.2 8L1.8 14.9H14.8V12.6" fill="none" stroke="#444" stroke-width="2.2"/></svg>
<span class="t" id="t47" style="left:1613.5px;top:90.0px;font-size:15px;line-height:20px;color:#262626;transform:scaleX(0.9282);">オート SUM</span>
<svg style="left:1701.1px;top:97.05px" width="5.8" height="3.9" viewBox="0 0 5.8 3.9"><path d="M0 0.5L2.9 3.4L5.8 0.5" fill="none" stroke="#505050" stroke-width="1.1"/></svg>
<svg style="left:1591px;top:118px" width="18" height="18" viewBox="0 0 18 18"><rect x="0.6" y="0.6" width="16" height="16.6" fill="#fff" stroke="#6a6a6a" stroke-width="1.1"/><rect x="0.6" y="0.6" width="16" height="2.4" fill="#6a6a6a"/><path d="M8.6 5V13M4.8 9.6L8.6 13.4L12.4 9.6" fill="none" stroke="#3f7cc4" stroke-width="2.4"/></svg>
<span class="t" id="t48" style="left:1613.5px;top:119.0px;font-size:15px;line-height:20px;color:#262626;transform:scaleX(0.8105);">フィル</span>
<svg style="left:1651.1px;top:126.55px" width="5.8" height="3.9" viewBox="0 0 5.8 3.9"><path d="M0 0.5L2.9 3.4L5.8 0.5" fill="none" stroke="#505050" stroke-width="1.1"/></svg>
<svg style="left:1592px;top:148px" width="17" height="17" viewBox="0 0 17 17"><path d="M10.4 0.6L16.2 6.6L6.6 16.2H4.4L0.4 11.4V10Z" fill="#ea8a9f"/><path d="M3.2 7.4L9.4 13.6" stroke="#f9d5dc" stroke-width="1.2"/></svg>
<span class="t" id="t49" style="left:1613.5px;top:148.0px;font-size:15px;line-height:20px;color:#262626;transform:scaleX(0.7700);">クリア</span>
<svg style="left:1651.1px;top:155.55px" width="5.8" height="3.9" viewBox="0 0 5.8 3.9"><path d="M0 0.5L2.9 3.4L5.8 0.5" fill="none" stroke="#505050" stroke-width="1.1"/></svg>
<span class="t" id="t50" style="left:1733.5px;top:85.0px;font-size:19.5px;line-height:28px;color:#3f7cc4;transform:scaleX(1.0000);font-weight:bold;">A</span>
<span class="t" id="t51" style="left:1734.5px;top:104.0px;font-size:19px;line-height:26px;color:#9b59c8;transform:scaleX(1.0833);font-weight:bold;">Z</span>
<svg style="left:1750px;top:98px" width="19" height="18" viewBox="0 0 19 18"><path d="M0.5 0.8H18.5L11.2 8.8V16.6H7.8V8.8Z" fill="#7a7a7a"/><path d="M9 9.4H10V15.6H9Z" fill="#f3f3f3"/></svg>
<span class="t" id="t52" style="left:1719.2px;top:131.0px;font-size:15px;line-height:20px;color:#262626;transform:scaleX(0.8736);">並べ替えと</span>
<span class="t" id="t53" style="left:1716.5px;top:150.0px;font-size:15px;line-height:20px;color:#262626;transform:scaleX(0.7970);">フィルター</span>
<svg style="left:1775.8999999999999px;top:158.05px" width="5.8" height="3.9" viewBox="0 0 5.8 3.9"><path d="M0 0.5L2.9 3.4L5.8 0.5" fill="none" stroke="#505050" stroke-width="1.1"/></svg>
<svg style="left:1796px;top:91px" width="35" height="35" viewBox="0 0 35 35"><circle cx="21.4" cy="13" r="11.2" fill="#fff" stroke="#3f7cc4" stroke-width="2.8"/><path d="M13.2 21.6L2.4 32.6" stroke="#3f7cc4" stroke-width="4.8" stroke-linecap="round"/></svg>
<span class="t" id="t54" style="left:1792.9px;top:131.0px;font-size:15px;line-height:20px;color:#262626;transform:scaleX(0.9116);">検索と</span>
<span class="t" id="t55" style="left:1790.1px;top:150.0px;font-size:15px;line-height:20px;color:#262626;transform:scaleX(0.9800);">選択</span>
<svg style="left:1827.1px;top:158.05px" width="5.8" height="3.9" viewBox="0 0 5.8 3.9"><path d="M0 0.5L2.9 3.4L5.8 0.5" fill="none" stroke="#505050" stroke-width="1.1"/></svg>
<span class="t" id="t56" style="left:1695.5px;top:176.0px;font-size:15px;line-height:20px;color:#262626;transform:scaleX(1.0000);">編集</span>
<div class="a" style="left:1848px;top:86px;width:1px;height:105px;background:#c9c9c9"></div>
<svg style="left:1897px;top:186px" width="13" height="7" viewBox="0 0 13 7"><path d="M0.6 6.4L6.5 0.8L12.4 6.4" fill="none" stroke="#444" stroke-width="1.2"/></svg>
<div class="a" style="left:0px;top:197px;width:1920px;height:61px;background:#e6e6e6"></div>
<div class="a" style="left:6px;top:210px;width:127px;height:36px;background:#fff;border:1px solid #c8c8c8"></div>
<span class="t" id="t57" style="left:13.5px;top:217.0px;font-size:18.5px;line-height:26px;color:#444;transform:scaleX(0.9412);">D19</span>
<svg style="left:118px;top:226px" width="8" height="5" viewBox="0 0 8 5"><path d="M0 0H8L4 4.5Z" fill="#777"/></svg>
<div class="a" style="left:150px;top:221px;width:3px;height:3px;background:#ababab"></div>
<div class="a" style="left:150px;top:226px;width:3px;height:3px;background:#ababab"></div>
<div class="a" style="left:150px;top:231px;width:3px;height:3px;background:#ababab"></div>
<div class="a" style="left:170px;top:210px;width:137px;height:36px;background:#fff;border:1px solid #c8c8c8"></div>
<svg style="left:185px;top:221px" width="16" height="14" viewBox="0 0 16 14"><path d="M1 1L14 13M14 1L1 13" stroke="#b8b8b8" stroke-width="2.1" fill="none"/></svg>
<svg style="left:229px;top:221px" width="18" height="14" viewBox="0 0 18 14"><path d="M1 8L6 13L17 1" stroke="#b8b8b8" stroke-width="2.6" fill="none"/></svg>
<span class="t" style="left:274px;top:216px;font-size:19.5px;line-height:24px;color:#555;font-family:'Liberation Serif',serif;font-style:italic;font-weight:bold;letter-spacing:-1px">fx</span>
<div class="a" style="left:310px;top:210px;width:1604px;height:36px;background:#fff;border:1px solid #c8c8c8"></div>
<span class="t" id="t58" style="left:325.5px;top:216.0px;font-size:17.5px;line-height:24px;color:#444;transform:scaleX(1.0159);">1171.83</span>
<svg style="left:1899px;top:225px" width="10" height="7" viewBox="0 0 10 7"><path d="M0.5 0.8L5 5.2L9.5 0.8" stroke="#666" stroke-width="2.5" fill="none"/></svg>
<div class="a" style="left:0px;top:258px;width:1895px;height:30px;background:#e6e6e6"></div>
<div class="a" style="left:37px;top:288px;width:1857px;height:687px;background:#fff"></div>
<svg style="left:11px;top:262px" width="23" height="23" viewBox="0 0 23 23"><path d="M22 0.4V21.8H0.6Z" fill="#b3b3b3"/></svg>
<div class="a" style="left:36px;top:258px;width:1px;height:30px;background:#b1b1b1"></div>
<div class="ch" style="left:37px;width:146px">A</div>
<div class="ch" style="left:183px;width:88px">B</div>
<div class="ch" style="left:271px;width:88px">C</div>
<div class="ch" style="left:359px;width:88px;background:#d2d2d2;color:#217346;border-bottom:2px solid #217346">D</div>
<div class="ch" style="left:447px;width:88px">E</div>
<div class="ch" style="left:535px;width:88px">F</div>
<div class="ch" style="left:623px;width:88px">G</div>
<div class="ch" style="left:711px;width:109px">H</div>
<div class="ch" style="left:820px;width:80px">I</div>
<div class="ch" style="left:900px;width:75px">J</div>
<div class="ch" style="left:975px;width:111px">K</div>
<div class="ch" style="left:1086px;width:88px">L</div>
<div class="ch" style="left:1174px;width:88px">M</div>
<div class="ch" style="left:1262px;width:88px">N</div>
<div class="ch" style="left:1350px;width:88px">O</div>
<div class="ch" style="left:1438px;width:88px">P</div>
<div class="ch" style="left:1526px;width:88px">Q</div>
<div class="ch" style="left:1614px;width:88px">R</div>
<div class="ch" style="left:1702px;width:88px">S</div>
<div class="ch" style="left:1790px;width:88px">T</div>
<div class="ch" style="left:1878px;width:16px;border-right:none"></div>
<div class="a" style="left:0px;top:287px;width:1895px;height:1px;background:#b1b1b1"></div>
<div class="a" style="left:359px;top:286px;width:88px;height:2px;background:#217346"></div>
<div class="a" style="left:0px;top:288px;width:36px;height:687px;background:#e6e6e6"></div>
<div class="a" style="left:36px;top:288px;width:1px;height:687px;background:#b1b1b1"></div>
<div class="rh" style="top:288px;">1</div>
<div class="rh" style="top:318px;">2</div>
<div class="rh" style="top:348px;">3</div>
<div class="rh" style="top:378px;">4</div>
<div class="rh" style="top:408px;">5</div>
<div class="rh" style="top:438px;">6</div>
<div class="rh" style="top:468px;">7</div>
<div class="rh" style="top:498px;">8</div>
<div class="rh" style="top:528px;">9</div>
<div class="rh" style="top:558px;">10</div>
<div class="rh" style="top:588px;">11</div>
<div class="rh" style="top:618px;">12</div>
<div class="rh" style="top:648px;">13</div>
<div class="rh" style="top:678px;">14</div>
<div class="rh" style="top:708px;">15</div>
<div class="rh" style="top:738px;">16</div>
<div class="rh" style="top:768px;">17</div>
<div class="rh" style="top:798px;">18</div>
<div class="rh" style="top:828px;background:#d2d2d2;color:#217346;">19</div>
<div class="rh" style="top:858px;">20</div>
<div class="rh" style="top:888px;">21</div>
<div class="rh" style="top:918px;">22</div>
<div class="rh" style="top:948px;">23</div>
<div class="a" style="left:35px;top:828px;width:2px;height:30px;background:#217346"></div>
<div class="a" id="grid" style="left:0;top:0;width:1895px;height:975px;overflow:hidden">
<div class="a" style="left:37px;top:317px;width:1857px;height:1px;background:#d4d4d4"></div>
<div class="a" style="left:37px;top:347px;width:1857px;height:1px;background:#d4d4d4"></div>
<div class="a" style="left:37px;top:377px;width:1857px;height:1px;background:#d4d4d4"></div>
<div class="a" style="left:37px;top:407px;width:1857px;height:1px;background:#d4d4d4"></div>
<div class="a" style="left:37px;top:437px;width:1857px;height:1px;background:#d4d4d4"></div>
<div class="a" style="left:37px;top:467px;width:1857px;height:1px;background:#d4d4d4"></div>
<div class="a" style="left:37px;top:497px;width:1857px;height:1px;background:#d4d4d4"></div>
<div class="a" style="left:37px;top:527px;width:1857px;height:1px;background:#d4d4d4"></div>
<div class="a" style="left:37px;top:557px;width:1857px;height:1px;background:#d4d4d4"></div>
<div class="a" style="left:37px;top:587px;width:1857px;height:1px;background:#d4d4d4"></div>
<div class="a" style="left:37px;top:617px;width:1857px;height:1px;background:#d4d4d4"></div>
<div class="a" style="left:37px;top:647px;width:1857px;height:1px;background:#d4d4d4"></div>
<div class="a" style="left:37px;top:677px;width:1857px;height:1px;background:#d4d4d4"></div>
<div class="a" style="left:37px;top:707px;width:1857px;height:1px;background:#d4d4d4"></div>
<div class="a" style="left:37px;top:737px;width:1857px;height:1px;background:#d4d4d4"></div>
<div class="a" style="left:37px;top:767px;width:1857px;height:1px;background:#d4d4d4"></div>
<div class="a" style="left:37px;top:797px;width:1857px;height:1px;background:#d4d4d4"></div>
<div class="a" style="left:37px;top:827px;width:1857px;height:1px;background:#d4d4d4"></div>
<div class="a" style="left:37px;top:857px;width:1857px;height:1px;background:#d4d4d4"></div>
<div class="a" style="left:37px;top:887px;width:1857px;height:1px;background:#d4d4d4"></div>
<div class="a" style="left:37px;top:917px;width:1857px;height:1px;background:#d4d4d4"></div>
<div class="a" style="left:37px;top:947px;width:1857px;height:1px;background:#d4d4d4"></div>
<div class="a" style="left:182px;top:288px;width:1px;height:687px;background:#d4d4d4"></div>
<div class="a" style="left:270px;top:288px;width:1px;height:687px;background:#d4d4d4"></div>
<div class="a" style="left:358px;top:288px;width:1px;height:687px;background:#d4d4d4"></div>
<div class="a" style="left:446px;top:288px;width:1px;height:687px;background:#d4d4d4"></div>
<div class="a" style="left:534px;top:288px;width:1px;height:687px;background:#d4d4d4"></div>
<div class="a" style="left:622px;top:288px;width:1px;height:687px;background:#d4d4d4"></div>
<div class="a" style="left:710px;top:288px;width:1px;height:687px;background:#d4d4d4"></div>
<div class="a" style="left:819px;top:288px;width:1px;height:687px;background:#d4d4d4"></div>
<div class="a" style="left:899px;top:288px;width:1px;height:687px;background:#d4d4d4"></div>
<div class="a" style="left:974px;top:288px;width:1px;height:687px;background:#d4d4d4"></div>
<div class="a" style="left:1085px;top:288px;width:1px;height:687px;background:#d4d4d4"></div>
<div class="a" style="left:1173px;top:288px;width:1px;height:687px;background:#d4d4d4"></div>
<div class="a" style="left:1261px;top:288px;width:1px;height:687px;background:#d4d4d4"></div>
<div class="a" style="left:1349px;top:288px;width:1px;height:687px;background:#d4d4d4"></div>
<div class="a" style="left:1437px;top:288px;width:1px;height:687px;background:#d4d4d4"></div>
<div class="a" style="left:1525px;top:288px;width:1px;height:687px;background:#d4d4d4"></div>
<div class="a" style="left:1613px;top:288px;width:1px;height:687px;background:#d4d4d4"></div>
<div class="a" style="left:1701px;top:288px;width:1px;height:687px;background:#d4d4d4"></div>
<div class="a" style="left:1789px;top:288px;width:1px;height:687px;background:#d4d4d4"></div>
<div class="a" style="left:1877px;top:288px;width:1px;height:687px;background:#d4d4d4"></div>
<div class="a" style="left:819px;top:287px;width:81px;height:31px;background:#ffc7ce"></div>
<div class="a" style="left:1261px;top:287px;width:89px;height:31px;background:#c6efce"></div>
<div class="a" style="left:1437px;top:287px;width:89px;height:31px;background:#c6efce"></div>
<div class="a" style="left:1613px;top:287px;width:89px;height:31px;background:#c6efce"></div>
<div class="a" style="left:534px;top:317px;width:89px;height:31px;background:#f8fafb"></div>
<div class="a" style="left:622px;top:317px;width:89px;height:31px;background:#f8fafb"></div>
<div class="a" style="left:819px;top:317px;width:81px;height:31px;background:#ffc7ce"></div>
<div class="a" style="left:1261px;top:317px;width:89px;height:31px;background:#c6efce"></div>
<div class="a" style="left:1437px;top:317px;width:89px;height:31px;background:#c6efce"></div>
<div class="a" style="left:1613px;top:317px;width:89px;height:31px;background:#c6efce"></div>
<div class="a" style="left:534px;top:347px;width:89px;height:31px;background:#c9e8d3"></div>
<div class="a" style="left:622px;top:347px;width:89px;height:31px;background:#d3ebdb"></div>
<div class="a" style="left:819px;top:347px;width:81px;height:31px;background:#c6efce"></div>
<div class="a" style="left:1261px;top:347px;width:89px;height:31px;background:#c6efce"></div>
<div class="a" style="left:1437px;top:347px;width:89px;height:31px;background:#c6efce"></div>
<div class="a" style="left:1613px;top:347px;width:89px;height:31px;background:#c6efce"></div>
<div class="a" style="left:534px;top:377px;width:89px;height:31px;background:#fcecef"></div>
<div class="a" style="left:622px;top:377px;width:89px;height:31px;background:#fcf1f4"></div>
<div class="a" style="left:819px;top:377px;width:81px;height:31px;background:#ffc7ce"></div>
<div class="a" style="left:1261px;top:377px;width:89px;height:31px;background:#ffc7ce"></div>
<div class="a" style="left:1437px;top:377px;width:89px;height:31px;background:#c6efce"></div>
<div class="a" style="left:1613px;top:377px;width:89px;height:31px;background:#ffc7ce"></div>
<div class="a" style="left:534px;top:407px;width:89px;height:31px;background:#eff7f4"></div>
<div class="a" style="left:622px;top:407px;width:89px;height:31px;background:#f2f8f6"></div>
<div class="a" style="left:819px;top:407px;width:81px;height:31px;background:#c6efce"></div>
<div class="a" style="left:1261px;top:407px;width:89px;height:31px;background:#ffc7ce"></div>
<div class="a" style="left:1437px;top:407px;width:89px;height:31px;background:#c6efce"></div>
<div class="a" style="left:1613px;top:407px;width:89px;height:31px;background:#ffc7ce"></div>
<div class="a" style="left:534px;top:437px;width:89px;height:31px;background:#fbd3d6"></div>
<div class="a" style="left:622px;top:437px;width:89px;height:31px;background:#fbdfe1"></div>
<div class="a" style="left:819px;top:437px;width:81px;height:31px;background:#ffc7ce"></div>
<div class="a" style="left:1261px;top:437px;width:89px;height:31px;background:#ffc7ce"></div>
<div class="a" style="left:1437px;top:437px;width:89px;height:31px;background:#c6efce"></div>
<div class="a" style="left:1613px;top:437px;width:89px;height:31px;background:#ffc7ce"></div>
<div class="a" style="left:534px;top:467px;width:89px;height:31px;background:#fbe3e6"></div>
<div class="a" style="left:622px;top:467px;width:89px;height:31px;background:#fceaed"></div>
<div class="a" style="left:819px;top:467px;width:81px;height:31px;background:#ffc7ce"></div>
<div class="a" style="left:1261px;top:467px;width:89px;height:31px;background:#c6efce"></div>
<div class="a" style="left:1437px;top:467px;width:89px;height:31px;background:#c6efce"></div>
<div class="a" style="left:1613px;top:467px;width:89px;height:31px;background:#c6efce"></div>
<div class="a" style="left:534px;top:497px;width:89px;height:31px;background:#cbe8d5"></div>
<div class="a" style="left:622px;top:497px;width:89px;height:31px;background:#d5ecdd"></div>
<div class="a" style="left:819px;top:497px;width:81px;height:31px;background:#c6efce"></div>
<div class="a" style="left:899px;top:497px;width:76px;height:31px;background:#5b9bd5"></div>
<div class="a" style="left:1261px;top:497px;width:89px;height:31px;background:#c6efce"></div>
<div class="a" style="left:1437px;top:497px;width:89px;height:31px;background:#c6efce"></div>
<div class="a" style="left:1613px;top:497px;width:89px;height:31px;background:#c6efce"></div>
<div class="a" style="left:1701px;top:497px;width:89px;height:31px;background:#ffc000"></div>
<div class="a" style="left:534px;top:527px;width:89px;height:31px;background:#ecf6f2"></div>
<div class="a" style="left:622px;top:527px;width:89px;height:31px;background:#f0f7f4"></div>
<div class="a" style="left:819px;top:527px;width:81px;height:31px;background:#c6efce"></div>
<div class="a" style="left:899px;top:527px;width:76px;height:31px;background:#5b9bd5"></div>
<div class="a" style="left:1261px;top:527px;width:89px;height:31px;background:#c6efce"></div>
<div class="a" style="left:1437px;top:527px;width:89px;height:31px;background:#ffc7ce"></div>
<div class="a" style="left:1613px;top:527px;width:89px;height:31px;background:#ffc7ce"></div>
<div class="a" style="left:1701px;top:527px;width:89px;height:31px;background:#ffc000"></div>
<div class="a" style="left:534px;top:557px;width:89px;height:31px;background:#f7fafb"></div>
<div class="a" style="left:622px;top:557px;width:89px;height:31px;background:#f8fafb"></div>
<div class="a" style="left:819px;top:557px;width:81px;height:31px;background:#c6efce"></div>
<div class="a" style="left:899px;top:557px;width:76px;height:31px;background:#5b9bd5"></div>
<div class="a" style="left:1261px;top:557px;width:89px;height:31px;background:#c6efce"></div>
<div class="a" style="left:1437px;top:557px;width:89px;height:31px;background:#ffc7ce"></div>
<div class="a" style="left:1613px;top:557px;width:89px;height:31px;background:#ffc7ce"></div>
<div class="a" style="left:1701px;top:557px;width:89px;height:31px;background:#ffc000"></div>
<div class="a" style="left:534px;top:587px;width:89px;height:31px;background:#e7f4ed"></div>
<div class="a" style="left:622px;top:587px;width:89px;height:31px;background:#ebf5f1"></div>
<div class="a" style="left:819px;top:587px;width:81px;height:31px;background:#c6efce"></div>
<div class="a" style="left:899px;top:587px;width:76px;height:31px;background:#5b9bd5"></div>
<div class="a" style="left:1261px;top:587px;width:89px;height:31px;background:#c6efce"></div>
<div class="a" style="left:1437px;top:587px;width:89px;height:31px;background:#ffc7ce"></div>
<div class="a" style="left:1613px;top:587px;width:89px;height:31px;background:#ffc7ce"></div>
<div class="a" style="left:1701px;top:587px;width:89px;height:31px;background:#ffc000"></div>
<div class="a" style="left:534px;top:617px;width:89px;height:31px;background:#fcfcff"></div>
<div class="a" style="left:622px;top:617px;width:89px;height:31px;background:#fcfcff"></div>
<div class="a" style="left:819px;top:617px;width:81px;height:31px;background:#ffc7ce"></div>
<div class="a" style="left:1261px;top:617px;width:89px;height:31px;background:#c6efce"></div>
<div class="a" style="left:1437px;top:617px;width:89px;height:31px;background:#ffc7ce"></div>
<div class="a" style="left:1613px;top:617px;width:89px;height:31px;background:#ffc7ce"></div>
<div class="a" style="left:1701px;top:617px;width:89px;height:31px;background:#ffc000"></div>
<div class="a" style="left:534px;top:647px;width:89px;height:31px;background:#ecf6f1"></div>
<div class="a" style="left:622px;top:647px;width:89px;height:31px;background:#f0f7f4"></div>
<div class="a" style="left:819px;top:647px;width:81px;height:31px;background:#c6efce"></div>
<div class="a" style="left:1261px;top:647px;width:89px;height:31px;background:#c6efce"></div>
<div class="a" style="left:1437px;top:647px;width:89px;height:31px;background:#ffc7ce"></div>
<div class="a" style="left:1613px;top:647px;width:89px;height:31px;background:#ffc7ce"></div>
<div class="a" style="left:534px;top:677px;width:89px;height:31px;background:#fcf7fa"></div>
<div class="a" style="left:622px;top:677px;width:89px;height:31px;background:#fcf7fa"></div>
<div class="a" style="left:819px;top:677px;width:81px;height:31px;background:#ffc7ce"></div>
<div class="a" style="left:1261px;top:677px;width:89px;height:31px;background:#ffc7ce"></div>
<div class="a" style="left:1437px;top:677px;width:89px;height:31px;background:#ffc7ce"></div>
<div class="a" style="left:1613px;top:677px;width:89px;height:31px;background:#ffc7ce"></div>
<div class="a" style="left:534px;top:707px;width:89px;height:31px;background:#f9fbfc"></div>
<div class="a" style="left:622px;top:707px;width:89px;height:31px;background:#fafbfd"></div>
<div class="a" style="left:819px;top:707px;width:81px;height:31px;background:#c6efce"></div>
<div class="a" style="left:1261px;top:707px;width:89px;height:31px;background:#ffc7ce"></div>
<div class="a" style="left:1437px;top:707px;width:89px;height:31px;background:#ffc7ce"></div>
<div class="a" style="left:1613px;top:707px;width:89px;height:31px;background:#ffc7ce"></div>
<div class="a" style="left:534px;top:737px;width:89px;height:31px;background:#fbe0e3"></div>
<div class="a" style="left:622px;top:737px;width:89px;height:31px;background:#fbe8eb"></div>
<div class="a" style="left:819px;top:737px;width:81px;height:31px;background:#ffc7ce"></div>
<div class="a" style="left:1261px;top:737px;width:89px;height:31px;background:#ffc7ce"></div>
<div class="a" style="left:1437px;top:737px;width:89px;height:31px;background:#ffc7ce"></div>
<div class="a" style="left:1613px;top:737px;width:89px;height:31px;background:#ffc7ce"></div>
<div class="a" style="left:534px;top:767px;width:89px;height:31px;background:#fbd3d5"></div>
<div class="a" style="left:622px;top:767px;width:89px;height:31px;background:#fbdfe1"></div>
<div class="a" style="left:819px;top:767px;width:81px;height:31px;background:#ffc7ce"></div>
<div class="a" style="left:1261px;top:767px;width:89px;height:31px;background:#ffc7ce"></div>
<div class="a" style="left:1437px;top:767px;width:89px;height:31px;background:#ffc7ce"></div>
<div class="a" style="left:1613px;top:767px;width:89px;height:31px;background:#ffc7ce"></div>
<div class="a" style="left:534px;top:797px;width:89px;height:31px;background:#fcfafd"></div>
<div class="a" style="left:622px;top:797px;width:89px;height:31px;background:#fcfafd"></div>
<div class="a" style="left:819px;top:797px;width:81px;height:31px;background:#c6efce"></div>
<div class="a" style="left:1261px;top:797px;width:89px;height:31px;background:#ffc7ce"></div>
<div class="a" style="left:1437px;top:797px;width:89px;height:31px;background:#ffc7ce"></div>
<div class="a" style="left:1613px;top:797px;width:89px;height:31px;background:#ffc7ce"></div>
<div class="a" style="left:534px;top:827px;width:89px;height:31px;background:#fbe0e3"></div>
<div class="a" style="left:622px;top:827px;width:89px;height:31px;background:#fbe8eb"></div>
<div class="a" style="left:819px;top:827px;width:81px;height:31px;background:#ffc7ce"></div>
<div class="a" style="left:1261px;top:827px;width:89px;height:31px;background:#ffc7ce"></div>
<div class="a" style="left:1437px;top:827px;width:89px;height:31px;background:#ffc7ce"></div>
<div class="a" style="left:1613px;top:827px;width:89px;height:31px;background:#ffc7ce"></div>
<div class="a" style="left:534px;top:857px;width:89px;height:31px;background:#fbd6d8"></div>
<div class="a" style="left:622px;top:857px;width:89px;height:31px;background:#fbe1e4"></div>
<div class="a" style="left:819px;top:857px;width:81px;height:31px;background:#ffc7ce"></div>
<div class="a" style="left:1261px;top:857px;width:89px;height:31px;background:#c6efce"></div>
<div class="a" style="left:1437px;top:857px;width:89px;height:31px;background:#ffc7ce"></div>
<div class="a" style="left:1613px;top:857px;width:89px;height:31px;background:#c6efce"></div>
<div class="a" style="left:534px;top:887px;width:89px;height:31px;background:#cde9d7"></div>
<div class="a" style="left:622px;top:887px;width:89px;height:31px;background:#d7eddf"></div>
<div class="a" style="left:819px;top:887px;width:81px;height:31px;background:#c6efce"></div>
<div class="a" style="left:899px;top:887px;width:76px;height:31px;background:#5b9bd5"></div>
<div class="a" style="left:1261px;top:887px;width:89px;height:31px;background:#c6efce"></div>
<div class="a" style="left:1437px;top:887px;width:89px;height:31px;background:#ffc7ce"></div>
<div class="a" style="left:1613px;top:887px;width:89px;height:31px;background:#c6efce"></div>
<div class="a" style="left:534px;top:917px;width:89px;height:31px;background:#f0f7f5"></div>
<div class="a" style="left:622px;top:917px;width:89px;height:31px;background:#f2f8f6"></div>
<div class="a" style="left:819px;top:917px;width:81px;height:31px;background:#c6efce"></div>
<div class="a" style="left:899px;top:917px;width:76px;height:31px;background:#5b9bd5"></div>
<div class="a" style="left:1261px;top:917px;width:89px;height:31px;background:#c6efce"></div>
<div class="a" style="left:1437px;top:917px;width:89px;height:31px;background:#ffc7ce"></div>
<div class="a" style="left:1613px;top:917px;width:89px;height:31px;background:#ffc7ce"></div>
<div class="a" style="left:534px;top:947px;width:89px;height:31px;background:#cfead9"></div>
<div class="a" style="left:622px;top:947px;width:89px;height:31px;background:#d9eee1"></div>
<div class="a" style="left:819px;top:947px;width:81px;height:31px;background:#c6efce"></div>
<div class="a" style="left:899px;top:947px;width:76px;height:31px;background:#5b9bd5"></div>
<div class="a" style="left:1261px;top:947px;width:89px;height:31px;background:#c6efce"></div>
<div class="a" style="left:1437px;top:947px;width:89px;height:31px;background:#ffc7ce"></div>
<div class="a" style="left:1613px;top:947px;width:89px;height:31px;background:#ffc7ce"></div>
<div class="c l k " style="left:37px;top:288px;width:145px">データ日付</div>
<div class="c l k " style="left:183px;top:288px;width:87px">始値</div>
<div class="c l k " style="left:271px;top:288px;width:87px">高値</div>
<div class="c l k " style="left:359px;top:288px;width:87px">安値</div>
<div class="c l k " style="left:447px;top:288px;width:87px">終値</div>
<div class="c l k " style="left:535px;top:288px;width:87px">前日比</div>
<div class="c l k " style="left:623px;top:288px;width:87px">比率</div>
<div class="c l k " style="left:711px;top:288px;width:108px">売買代金</div>
<div class="c m k rd" style="left:820px;top:288px;width:79px">陽線陰線</div>
<div class="c m k " style="left:900px;top:288px;width:74px">連続数</div>
<div class="c l k " style="left:975px;top:288px;width:110px">終値前日比較</div>
<div class="c l k " style="left:1086px;top:288px;width:87px">上幅下幅</div>
<div class="c l k " style="left:1174px;top:288px;width:87px">5日比較</div>
<div class="c l k " style="left:1350px;top:288px;width:87px">25日比較</div>
<div class="c l k " style="left:1526px;top:288px;width:87px">60日比</div>
<div class="c l k " style="left:1702px;top:288px;width:87px">トレンド判定</div>
<div class="c l k " style="left:1790px;top:288px;width:87px">空売り比率</div>
<div class="c l k " style="left:1878px;top:288px;width:87px">空売り</div>
<div class="c r " style="left:37px;top:318px;width:145px">2021年7月16日</div>
<div class="c r " style="left:183px;top:318px;width:87px">1,151.59</div>
<div class="c r " style="left:271px;top:318px;width:87px">1,163.39</div>
<div class="c r " style="left:359px;top:318px;width:87px">1,147.52</div>
<div class="c r " style="left:447px;top:318px;width:87px">1,158.70</div>
<div class="c r " style="left:535px;top:318px;width:87px">-2</div>
<div class="c r " style="left:623px;top:318px;width:87px">-0.2</div>
<div class="c r " style="left:711px;top:318px;width:108px">70,144,000</div>
<div class="c m k rd" style="left:820px;top:318px;width:79px">陽</div>
<div class="c m " style="left:900px;top:318px;width:74px">1</div>
<div class="c r " style="left:975px;top:318px;width:110px">-2</div>
<div class="c r " style="left:1174px;top:318px;width:87px">1172.958</div>
<div class="c r " style="left:1350px;top:318px;width:87px">1184.964</div>
<div class="c r " style="left:1526px;top:318px;width:87px">1164.551</div>
<div class="c r gr" style="left:1262px;top:318px;width:87px">0.987844</div>
<div class="c r gr" style="left:1438px;top:318px;width:87px">0.977836</div>
<div class="c r gr" style="left:1614px;top:318px;width:87px">0.994976</div>
<div class="c r " style="left:37px;top:348px;width:145px">2021年7月15日</div>
<div class="c r " style="left:183px;top:348px;width:87px">1,181.90</div>
<div class="c r " style="left:271px;top:348px;width:87px">1,181.93</div>
<div class="c r " style="left:359px;top:348px;width:87px">1,158.37</div>
<div class="c r " style="left:447px;top:348px;width:87px">1,160.70</div>
<div class="c r " style="left:535px;top:348px;width:87px">-23.13</div>
<div class="c r " style="left:623px;top:348px;width:87px">-2</div>
<div class="c r " style="left:711px;top:348px;width:108px">78,909,700</div>
<div class="c m k gr" style="left:820px;top:348px;width:79px">陰</div>
<div class="c m " style="left:900px;top:348px;width:74px">1</div>
<div class="c r " style="left:975px;top:348px;width:110px">-23</div>
<div class="c r " style="left:1174px;top:348px;width:87px">1174.878</div>
<div class="c r " style="left:1350px;top:348px;width:87px">1185.91</div>
<div class="c r " style="left:1526px;top:348px;width:87px">1166.192</div>
<div class="c r gr" style="left:1262px;top:348px;width:87px">0.987932</div>
<div class="c r gr" style="left:1438px;top:348px;width:87px">0.978742</div>
<div class="c r gr" style="left:1614px;top:348px;width:87px">0.995291</div>
<div class="c r " style="left:37px;top:378px;width:145px">2021年7月14日</div>
<div class="c r " style="left:183px;top:378px;width:87px">1,173.90</div>
<div class="c r " style="left:271px;top:378px;width:87px">1,186.27</div>
<div class="c r " style="left:359px;top:378px;width:87px">1,173.37</div>
<div class="c r " style="left:447px;top:378px;width:87px">1,183.83</div>
<div class="c r " style="left:535px;top:378px;width:87px">5.94</div>
<div class="c r " style="left:623px;top:378px;width:87px">0.5</div>
<div class="c r " style="left:711px;top:378px;width:108px">88,033,700</div>
<div class="c m k rd" style="left:820px;top:378px;width:79px">陽</div>
<div class="c m " style="left:900px;top:378px;width:74px">1</div>
<div class="c r " style="left:975px;top:378px;width:110px">6</div>
<div class="c r " style="left:1174px;top:378px;width:87px">1174.554</div>
<div class="c r " style="left:1350px;top:378px;width:87px">1186.731</div>
<div class="c r " style="left:1526px;top:378px;width:87px">1167.688</div>
<div class="c r rd" style="left:1262px;top:378px;width:87px">1.007897</div>
<div class="c r gr" style="left:1438px;top:378px;width:87px">0.997556</div>
<div class="c r rd" style="left:1614px;top:378px;width:87px">1.013824</div>
<div class="c r " style="left:37px;top:408px;width:145px">2021年7月13日</div>
<div class="c r " style="left:183px;top:408px;width:87px">1,183.39</div>
<div class="c r " style="left:271px;top:408px;width:87px">1,188.92</div>
<div class="c r " style="left:359px;top:408px;width:87px">1,176.53</div>
<div class="c r " style="left:447px;top:408px;width:87px">1,177.89</div>
<div class="c r " style="left:535px;top:408px;width:87px">-5.78</div>
<div class="c r " style="left:623px;top:408px;width:87px">-0.5</div>
<div class="c r " style="left:711px;top:408px;width:108px">75,553,100</div>
<div class="c m k gr" style="left:820px;top:408px;width:79px">陰</div>
<div class="c m " style="left:900px;top:408px;width:74px">1</div>
<div class="c r " style="left:975px;top:408px;width:110px">-6</div>
<div class="c r " style="left:1174px;top:408px;width:87px">1174.072</div>
<div class="c r " style="left:1350px;top:408px;width:87px">1186.345</div>
<div class="c r " style="left:1526px;top:408px;width:87px">1168.427</div>
<div class="c r rd" style="left:1262px;top:408px;width:87px">1.003252</div>
<div class="c r gr" style="left:1438px;top:408px;width:87px">0.992873</div>
<div class="c r rd" style="left:1614px;top:408px;width:87px">1.008099</div>
<div class="c r " style="left:37px;top:438px;width:145px">2021年7月12日</div>
<div class="c r " style="left:183px;top:438px;width:87px">1,181.52</div>
<div class="c r " style="left:271px;top:438px;width:87px">1,184.64</div>
<div class="c r " style="left:359px;top:438px;width:87px">1,176.07</div>
<div class="c r " style="left:447px;top:438px;width:87px">1,183.67</div>
<div class="c r " style="left:535px;top:438px;width:87px">15.37</div>
<div class="c r " style="left:623px;top:438px;width:87px">1.3</div>
<div class="c r " style="left:711px;top:438px;width:108px">67,351,800</div>
<div class="c m k rd" style="left:820px;top:438px;width:79px">陽</div>
<div class="c m " style="left:900px;top:438px;width:74px">2</div>
<div class="c r " style="left:975px;top:438px;width:110px">25</div>
<div class="c r " style="left:1174px;top:438px;width:87px">1176.2</div>
<div class="c r " style="left:1350px;top:438px;width:87px">1185.63</div>
<div class="c r " style="left:1526px;top:438px;width:87px">1169.381</div>
<div class="c r rd" style="left:1262px;top:438px;width:87px">1.006351</div>
<div class="c r gr" style="left:1438px;top:438px;width:87px">0.998347</div>
<div class="c r rd" style="left:1614px;top:438px;width:87px">1.012219</div>
<div class="c r " style="left:37px;top:468px;width:145px">2021年7月9日</div>
<div class="c r " style="left:183px;top:468px;width:87px">1,144.05</div>
<div class="c r " style="left:271px;top:468px;width:87px">1,169.34</div>
<div class="c r " style="left:359px;top:468px;width:87px">1,142.04</div>
<div class="c r " style="left:447px;top:468px;width:87px">1,168.30</div>
<div class="c r " style="left:535px;top:468px;width:87px">9.22</div>
<div class="c r " style="left:623px;top:468px;width:87px">0.8</div>
<div class="c r " style="left:711px;top:468px;width:108px">89,441,400</div>
<div class="c m k rd" style="left:820px;top:468px;width:79px">陽</div>
<div class="c m " style="left:900px;top:468px;width:74px">1</div>
<div class="c r " style="left:975px;top:468px;width:110px">9</div>
<div class="c r " style="left:1174px;top:468px;width:87px">1177.632</div>
<div class="c r " style="left:1350px;top:468px;width:87px">1183.657</div>
<div class="c r " style="left:1526px;top:468px;width:87px">1169.924</div>
<div class="c r gr" style="left:1262px;top:468px;width:87px">0.992076</div>
<div class="c r gr" style="left:1438px;top:468px;width:87px">0.987026</div>
<div class="c r gr" style="left:1614px;top:468px;width:87px">0.998612</div>
<div class="c r " style="left:37px;top:498px;width:145px">2021年7月8日</div>
<div class="c r " style="left:183px;top:498px;width:87px">1,177.45</div>
<div class="c r " style="left:271px;top:498px;width:87px">1,178.55</div>
<div class="c r " style="left:359px;top:498px;width:87px">1,155.88</div>
<div class="c r " style="left:447px;top:498px;width:87px">1,159.08</div>
<div class="c r " style="left:535px;top:498px;width:87px">-22.34</div>
<div class="c r " style="left:623px;top:498px;width:87px">-1.9</div>
<div class="c r " style="left:711px;top:498px;width:108px">106,720,100</div>
<div class="c m k gr" style="left:820px;top:498px;width:79px">陰</div>
<div class="c m " style="left:900px;top:498px;width:74px">4</div>
<div class="c r " style="left:975px;top:498px;width:110px">-41</div>
<div class="c r " style="left:1174px;top:498px;width:87px">1184.046</div>
<div class="c r " style="left:1350px;top:498px;width:87px">1181.714</div>
<div class="c r " style="left:1526px;top:498px;width:87px">1170.719</div>
<div class="c r gr" style="left:1262px;top:498px;width:87px">0.978915</div>
<div class="c r gr" style="left:1438px;top:498px;width:87px">0.980846</div>
<div class="c r gr" style="left:1614px;top:498px;width:87px">0.990059</div>
<div class="c l k " style="left:1702px;top:498px;width:87px">上昇</div>
<div class="c r " style="left:37px;top:528px;width:145px">2021年7月7日</div>
<div class="c r " style="left:183px;top:528px;width:87px">1,183.83</div>
<div class="c r " style="left:271px;top:528px;width:87px">1,192.88</div>
<div class="c r " style="left:359px;top:528px;width:87px">1,178.47</div>
<div class="c r " style="left:447px;top:528px;width:87px">1,181.42</div>
<div class="c r " style="left:535px;top:528px;width:87px">-7.11</div>
<div class="c r " style="left:623px;top:528px;width:87px">-0.6</div>
<div class="c r " style="left:711px;top:528px;width:108px">75,911,400</div>
<div class="c m k gr" style="left:820px;top:528px;width:79px">陰</div>
<div class="c m " style="left:900px;top:528px;width:74px">3</div>
<div class="c r " style="left:975px;top:528px;width:110px">-19</div>
<div class="c r " style="left:1174px;top:528px;width:87px">1192.272</div>
<div class="c r " style="left:1350px;top:528px;width:87px">1181.009</div>
<div class="c r " style="left:1526px;top:528px;width:87px">1172.14</div>
<div class="c r gr" style="left:1262px;top:528px;width:87px">0.990898</div>
<div class="c r rd" style="left:1438px;top:528px;width:87px">1.000348</div>
<div class="c r rd" style="left:1614px;top:528px;width:87px">1.007917</div>
<div class="c l k " style="left:1702px;top:528px;width:87px">上昇</div>
<div class="c r " style="left:37px;top:558px;width:145px">2021年7月6日</div>
<div class="c r " style="left:183px;top:558px;width:87px">1,191.11</div>
<div class="c r " style="left:271px;top:558px;width:87px">1,192.75</div>
<div class="c r " style="left:359px;top:558px;width:87px">1,183.19</div>
<div class="c r " style="left:447px;top:558px;width:87px">1,188.53</div>
<div class="c r " style="left:535px;top:558px;width:87px">-2.3</div>
<div class="c r " style="left:623px;top:558px;width:87px">-0.2</div>
<div class="c r " style="left:711px;top:558px;width:108px">98,058,200</div>
<div class="c m k gr" style="left:820px;top:558px;width:79px">陰</div>
<div class="c m " style="left:900px;top:558px;width:74px">2</div>
<div class="c r " style="left:975px;top:558px;width:110px">-12</div>
<div class="c r " style="left:1174px;top:558px;width:87px">1197.48</div>
<div class="c r " style="left:1350px;top:558px;width:87px">1179.184</div>
<div class="c r " style="left:1526px;top:558px;width:87px">1172.857</div>
<div class="c r gr" style="left:1262px;top:558px;width:87px">0.992526</div>
<div class="c r rd" style="left:1438px;top:558px;width:87px">1.007926</div>
<div class="c r rd" style="left:1614px;top:558px;width:87px">1.013364</div>
<div class="c l k " style="left:1702px;top:558px;width:87px">上昇</div>
<div class="c r " style="left:37px;top:588px;width:145px">2021年7月5日</div>
<div class="c r " style="left:183px;top:588px;width:87px">1,203.41</div>
<div class="c r " style="left:271px;top:588px;width:87px">1,208.69</div>
<div class="c r " style="left:359px;top:588px;width:87px">1,190.46</div>
<div class="c r " style="left:447px;top:588px;width:87px">1,190.83</div>
<div class="c r " style="left:535px;top:588px;width:87px">-9.54</div>
<div class="c r " style="left:623px;top:588px;width:87px">-0.8</div>
<div class="c r " style="left:711px;top:588px;width:108px">72,917,400</div>
<div class="c m k gr" style="left:820px;top:588px;width:79px">陰</div>
<div class="c m " style="left:900px;top:588px;width:74px">1</div>
<div class="c r " style="left:975px;top:588px;width:110px">-10</div>
<div class="c r " style="left:1174px;top:588px;width:87px">1200.882</div>
<div class="c r " style="left:1350px;top:588px;width:87px">1177.312</div>
<div class="c r " style="left:1526px;top:588px;width:87px">1173.515</div>
<div class="c r gr" style="left:1262px;top:588px;width:87px">0.991629</div>
<div class="c r rd" style="left:1438px;top:588px;width:87px">1.011482</div>
<div class="c r rd" style="left:1614px;top:588px;width:87px">1.014755</div>
<div class="c l k " style="left:1702px;top:588px;width:87px">上昇</div>
<div class="c r " style="left:37px;top:618px;width:145px">2021年7月2日</div>
<div class="c r " style="left:183px;top:618px;width:87px">1,198.80</div>
<div class="c r " style="left:271px;top:618px;width:87px">1,204.46</div>
<div class="c r " style="left:359px;top:618px;width:87px">1,196.67</div>
<div class="c r " style="left:447px;top:618px;width:87px">1,200.37</div>
<div class="c r " style="left:535px;top:618px;width:87px">0.16</div>
<div class="c r " style="left:623px;top:618px;width:87px">0</div>
<div class="c r " style="left:711px;top:618px;width:108px">84,713,400</div>
<div class="c m k rd" style="left:820px;top:618px;width:79px">陽</div>
<div class="c m " style="left:900px;top:618px;width:74px">1</div>
<div class="c r " style="left:975px;top:618px;width:110px">0</div>
<div class="c r " style="left:1174px;top:618px;width:87px">1204.124</div>
<div class="c r " style="left:1350px;top:618px;width:87px">1175.682</div>
<div class="c r " style="left:1526px;top:618px;width:87px">1174.099</div>
<div class="c r gr" style="left:1262px;top:618px;width:87px">0.996882</div>
<div class="c r rd" style="left:1438px;top:618px;width:87px">1.020999</div>
<div class="c r rd" style="left:1614px;top:618px;width:87px">1.022376</div>
<div class="c l k " style="left:1702px;top:618px;width:87px">上昇</div>
<div class="c r " style="left:37px;top:648px;width:145px">2021年7月1日</div>
<div class="c r " style="left:183px;top:648px;width:87px">1,203.32</div>
<div class="c r " style="left:271px;top:648px;width:87px">1,204.20</div>
<div class="c r " style="left:359px;top:648px;width:87px">1,198.69</div>
<div class="c r " style="left:447px;top:648px;width:87px">1,200.21</div>
<div class="c r " style="left:535px;top:648px;width:87px">-7.25</div>
<div class="c r " style="left:623px;top:648px;width:87px">-0.6</div>
<div class="c r " style="left:711px;top:648px;width:108px">76,642,000</div>
<div class="c m k gr" style="left:820px;top:648px;width:79px">陰</div>
<div class="c m " style="left:900px;top:648px;width:74px">1</div>
<div class="c r " style="left:975px;top:648px;width:110px">-7</div>
<div class="c r " style="left:1174px;top:648px;width:87px">1203.386</div>
<div class="c r " style="left:1350px;top:648px;width:87px">1173.474</div>
<div class="c r " style="left:1526px;top:648px;width:87px">1174.77</div>
<div class="c r gr" style="left:1262px;top:648px;width:87px">0.997361</div>
<div class="c r rd" style="left:1438px;top:648px;width:87px">1.022783</div>
<div class="c r rd" style="left:1614px;top:648px;width:87px">1.021656</div>
<div class="c r " style="left:37px;top:678px;width:145px">2021年6月30日</div>
<div class="c r " style="left:183px;top:678px;width:87px">1,204.71</div>
<div class="c r " style="left:271px;top:678px;width:87px">1,209.49</div>
<div class="c r " style="left:359px;top:678px;width:87px">1,201.61</div>
<div class="c r " style="left:447px;top:678px;width:87px">1,207.46</div>
<div class="c r " style="left:535px;top:678px;width:87px">1.92</div>
<div class="c r " style="left:623px;top:678px;width:87px">0.2</div>
<div class="c r " style="left:711px;top:678px;width:108px">97,992,500</div>
<div class="c m k rd" style="left:820px;top:678px;width:79px">陽</div>
<div class="c m " style="left:900px;top:678px;width:74px">1</div>
<div class="c r " style="left:975px;top:678px;width:110px">2</div>
<div class="c r " style="left:1174px;top:678px;width:87px">1199.592</div>
<div class="c r " style="left:1350px;top:678px;width:87px">1171.301</div>
<div class="c r " style="left:1526px;top:678px;width:87px">1175.424</div>
<div class="c r rd" style="left:1262px;top:678px;width:87px">1.006559</div>
<div class="c r rd" style="left:1438px;top:678px;width:87px">1.030871</div>
<div class="c r rd" style="left:1614px;top:678px;width:87px">1.027255</div>
<div class="c r " style="left:37px;top:708px;width:145px">2021年6月29日</div>
<div class="c r " style="left:183px;top:708px;width:87px">1,208.46</div>
<div class="c r " style="left:271px;top:708px;width:87px">1,210.92</div>
<div class="c r " style="left:359px;top:708px;width:87px">1,196.82</div>
<div class="c r " style="left:447px;top:708px;width:87px">1,205.54</div>
<div class="c r " style="left:535px;top:708px;width:87px">-1.5</div>
<div class="c r " style="left:623px;top:708px;width:87px">-0.1</div>
<div class="c r " style="left:711px;top:708px;width:108px">98,633,000</div>
<div class="c m k gr" style="left:820px;top:708px;width:79px">陰</div>
<div class="c m " style="left:900px;top:708px;width:74px">1</div>
<div class="c r " style="left:975px;top:708px;width:110px">-2</div>
<div class="c r " style="left:1174px;top:708px;width:87px">1194.198</div>
<div class="c r " style="left:1350px;top:708px;width:87px">1168.946</div>
<div class="c r " style="left:1526px;top:708px;width:87px">1175.806</div>
<div class="c r rd" style="left:1262px;top:708px;width:87px">1.009498</div>
<div class="c r rd" style="left:1438px;top:708px;width:87px">1.031305</div>
<div class="c r rd" style="left:1614px;top:708px;width:87px">1.025288</div>
<div class="c r " style="left:37px;top:738px;width:145px">2021年6月28日</div>
<div class="c r " style="left:183px;top:738px;width:87px">1,198.84</div>
<div class="c r " style="left:271px;top:738px;width:87px">1,207.17</div>
<div class="c r " style="left:359px;top:738px;width:87px">1,197.66</div>
<div class="c r " style="left:447px;top:738px;width:87px">1,207.04</div>
<div class="c r " style="left:535px;top:738px;width:87px">10.36</div>
<div class="c r " style="left:623px;top:738px;width:87px">0.9</div>
<div class="c r " style="left:711px;top:738px;width:108px">68,109,700</div>
<div class="c m k rd" style="left:820px;top:738px;width:79px">陽</div>
<div class="c m " style="left:900px;top:738px;width:74px">2</div>
<div class="c r " style="left:975px;top:738px;width:110px">26</div>
<div class="c r " style="left:1174px;top:738px;width:87px">1187.116</div>
<div class="c r " style="left:1350px;top:738px;width:87px">1166.064</div>
<div class="c r " style="left:1526px;top:738px;width:87px">1175.768</div>
<div class="c r rd" style="left:1262px;top:738px;width:87px">1.016784</div>
<div class="c r rd" style="left:1438px;top:738px;width:87px">1.035141</div>
<div class="c r rd" style="left:1614px;top:738px;width:87px">1.026597</div>
<div class="c r " style="left:37px;top:768px;width:145px">2021年6月25日</div>
<div class="c r " style="left:183px;top:768px;width:87px">1,186.32</div>
<div class="c r " style="left:271px;top:768px;width:87px">1,196.68</div>
<div class="c r " style="left:359px;top:768px;width:87px">1,182.76</div>
<div class="c r " style="left:447px;top:768px;width:87px">1,196.68</div>
<div class="c r " style="left:535px;top:768px;width:87px">15.44</div>
<div class="c r " style="left:623px;top:768px;width:87px">1.3</div>
<div class="c r " style="left:711px;top:768px;width:108px">88,358,200</div>
<div class="c m k rd" style="left:820px;top:768px;width:79px">陽</div>
<div class="c m " style="left:900px;top:768px;width:74px">1</div>
<div class="c r " style="left:975px;top:768px;width:110px">15</div>
<div class="c r " style="left:1174px;top:768px;width:87px">1176.862</div>
<div class="c r " style="left:1350px;top:768px;width:87px">1162.116</div>
<div class="c r " style="left:1526px;top:768px;width:87px">1175.325</div>
<div class="c r rd" style="left:1262px;top:768px;width:87px">1.01684</div>
<div class="c r rd" style="left:1438px;top:768px;width:87px">1.029742</div>
<div class="c r rd" style="left:1614px;top:768px;width:87px">1.01817</div>
<div class="c r " style="left:37px;top:798px;width:145px">2021年6月24日</div>
<div class="c r " style="left:183px;top:798px;width:87px">1,181.33</div>
<div class="c r " style="left:271px;top:798px;width:87px">1,195.82</div>
<div class="c r " style="left:359px;top:798px;width:87px">1,180.24</div>
<div class="c r " style="left:447px;top:798px;width:87px">1,181.24</div>
<div class="c r " style="left:535px;top:798px;width:87px">0.75</div>
<div class="c r " style="left:623px;top:798px;width:87px">0.1</div>
<div class="c r " style="left:711px;top:798px;width:108px">99,933,200</div>
<div class="c m k gr" style="left:820px;top:798px;width:79px">陰</div>
<div class="c m " style="left:900px;top:798px;width:74px">1</div>
<div class="c r " style="left:975px;top:798px;width:110px">1</div>
<div class="c r " style="left:1174px;top:798px;width:87px">1172.96</div>
<div class="c r " style="left:1350px;top:798px;width:87px">1159.395</div>
<div class="c r " style="left:1526px;top:798px;width:87px">1175</div>
<div class="c r rd" style="left:1262px;top:798px;width:87px">1.007059</div>
<div class="c r rd" style="left:1438px;top:798px;width:87px">1.018842</div>
<div class="c r rd" style="left:1614px;top:798px;width:87px">1.005311</div>
<div class="c r " style="left:37px;top:828px;width:145px">2021年6月23日</div>
<div class="c r " style="left:183px;top:828px;width:87px">1,174.58</div>
<div class="c r " style="left:271px;top:828px;width:87px">1,181.84</div>
<div class="c r " style="left:359px;top:828px;width:87px">1,171.83</div>
<div class="c r " style="left:447px;top:828px;width:87px">1,180.49</div>
<div class="c r " style="left:535px;top:828px;width:87px">10.36</div>
<div class="c r " style="left:623px;top:828px;width:87px">0.9</div>
<div class="c r " style="left:711px;top:828px;width:108px">96,662,300</div>
<div class="c m k rd" style="left:820px;top:828px;width:79px">陽</div>
<div class="c m " style="left:900px;top:828px;width:74px">2</div>
<div class="c r " style="left:975px;top:828px;width:110px">25</div>
<div class="c r " style="left:1174px;top:828px;width:87px">1173.242</div>
<div class="c r " style="left:1350px;top:828px;width:87px">1156.296</div>
<div class="c r " style="left:1526px;top:828px;width:87px">1175.289</div>
<div class="c r rd" style="left:1262px;top:828px;width:87px">1.006178</div>
<div class="c r rd" style="left:1438px;top:828px;width:87px">1.020924</div>
<div class="c r rd" style="left:1614px;top:828px;width:87px">1.004425</div>
<div class="c r " style="left:37px;top:858px;width:145px">2021年6月22日</div>
<div class="c r " style="left:183px;top:858px;width:87px">1,169.09</div>
<div class="c r " style="left:271px;top:858px;width:87px">1,177.45</div>
<div class="c r " style="left:359px;top:858px;width:87px">1,164.11</div>
<div class="c r " style="left:447px;top:858px;width:87px">1,170.13</div>
<div class="c r " style="left:535px;top:858px;width:87px">14.36</div>
<div class="c r " style="left:623px;top:858px;width:87px">1.2</div>
<div class="c r " style="left:711px;top:858px;width:108px">158,308,100</div>
<div class="c m k rd" style="left:820px;top:858px;width:79px">陽</div>
<div class="c m " style="left:900px;top:858px;width:74px">1</div>
<div class="c r " style="left:975px;top:858px;width:110px">14</div>
<div class="c r " style="left:1174px;top:858px;width:87px">1177.752</div>
<div class="c r " style="left:1350px;top:858px;width:87px">1152.759</div>
<div class="c r " style="left:1526px;top:858px;width:87px">1175.011</div>
<div class="c r gr" style="left:1262px;top:858px;width:87px">0.993528</div>
<div class="c r rd" style="left:1438px;top:858px;width:87px">1.015069</div>
<div class="c r gr" style="left:1614px;top:858px;width:87px">0.995846</div>
<div class="c r " style="left:37px;top:888px;width:145px">2021年6月21日</div>
<div class="c r " style="left:183px;top:888px;width:87px">1,155.88</div>
<div class="c r " style="left:271px;top:888px;width:87px">1,162.70</div>
<div class="c r " style="left:359px;top:888px;width:87px">1,149.24</div>
<div class="c r " style="left:447px;top:888px;width:87px">1,155.77</div>
<div class="c r " style="left:535px;top:888px;width:87px">-21.4</div>
<div class="c r " style="left:623px;top:888px;width:87px">-1.8</div>
<div class="c r " style="left:711px;top:888px;width:108px">94,540,700</div>
<div class="c m k gr" style="left:820px;top:888px;width:79px">陰</div>
<div class="c m " style="left:900px;top:888px;width:74px">3</div>
<div class="c r " style="left:975px;top:888px;width:110px">-47</div>
<div class="c r " style="left:1174px;top:888px;width:87px">1184.652</div>
<div class="c r " style="left:1350px;top:888px;width:87px">1148.734</div>
<div class="c r " style="left:1526px;top:888px;width:87px">1174.907</div>
<div class="c r gr" style="left:1262px;top:888px;width:87px">0.97562</div>
<div class="c r rd" style="left:1438px;top:888px;width:87px">1.006125</div>
<div class="c r gr" style="left:1614px;top:888px;width:87px">0.983712</div>
<div class="c r " style="left:37px;top:918px;width:145px">2021年6月18日</div>
<div class="c r " style="left:183px;top:918px;width:87px">1,194.15</div>
<div class="c r " style="left:271px;top:918px;width:87px">1,201.50</div>
<div class="c r " style="left:359px;top:918px;width:87px">1,176.34</div>
<div class="c r " style="left:447px;top:918px;width:87px">1,177.17</div>
<div class="c r " style="left:535px;top:918px;width:87px">-5.48</div>
<div class="c r " style="left:623px;top:918px;width:87px">-0.5</div>
<div class="c r " style="left:711px;top:918px;width:108px">197,574,900</div>
<div class="c m k gr" style="left:820px;top:918px;width:79px">陰</div>
<div class="c m " style="left:900px;top:918px;width:74px">2</div>
<div class="c r " style="left:975px;top:918px;width:110px">-26</div>
<div class="c r " style="left:1174px;top:918px;width:87px">1193.242</div>
<div class="c r " style="left:1350px;top:918px;width:87px">1144.216</div>
<div class="c r " style="left:1526px;top:918px;width:87px">1175.687</div>
<div class="c r gr" style="left:1262px;top:918px;width:87px">0.986531</div>
<div class="c r rd" style="left:1438px;top:918px;width:87px">1.028801</div>
<div class="c r rd" style="left:1614px;top:918px;width:87px">1.001261</div>
<div class="c r " style="left:37px;top:948px;width:145px">2021年6月17日</div>
<div class="c r " style="left:183px;top:948px;width:87px">1,194.08</div>
<div class="c r " style="left:271px;top:948px;width:87px">1,194.08</div>
<div class="c r " style="left:359px;top:948px;width:87px">1,173.66</div>
<div class="c r " style="left:447px;top:948px;width:87px">1,182.65</div>
<div class="c r " style="left:535px;top:948px;width:87px">-20.39</div>
<div class="c r " style="left:623px;top:948px;width:87px">-1.7</div>
<div class="c r " style="left:711px;top:948px;width:108px">247,273,900</div>
<div class="c m k gr" style="left:820px;top:948px;width:79px">陰</div>
<div class="c m " style="left:900px;top:948px;width:74px">1</div>
<div class="c r " style="left:975px;top:948px;width:110px">-20</div>
<div class="c r " style="left:1174px;top:948px;width:87px">1194.282</div>
<div class="c r " style="left:1350px;top:948px;width:87px">1140.51</div>
<div class="c r " style="left:1526px;top:948px;width:87px">1176.403</div>
<div class="c r gr" style="left:1262px;top:948px;width:87px">0.99026</div>
<div class="c r rd" style="left:1438px;top:948px;width:87px">1.036948</div>
<div class="c r rd" style="left:1614px;top:948px;width:87px">1.00531</div>
<svg style="left:0;top:0" width="1895" height="975" viewBox="0 0 1895 975" fill="#107c41"><path d="M1350 318h7l-7 7z"/><path d="M1526 318h7l-7 7z"/><path d="M1350 348h7l-7 7z"/><path d="M1526 348h7l-7 7z"/><path d="M1350 378h7l-7 7z"/><path d="M1526 378h7l-7 7z"/><path d="M1350 408h7l-7 7z"/><path d="M1526 408h7l-7 7z"/><path d="M1350 438h7l-7 7z"/><path d="M1526 438h7l-7 7z"/><path d="M1350 468h7l-7 7z"/><path d="M1526 468h7l-7 7z"/><path d="M1350 498h7l-7 7z"/><path d="M1526 498h7l-7 7z"/><path d="M1350 528h7l-7 7z"/><path d="M1526 528h7l-7 7z"/><path d="M1350 558h7l-7 7z"/><path d="M1526 558h7l-7 7z"/><path d="M1350 588h7l-7 7z"/><path d="M1526 588h7l-7 7z"/><path d="M1350 618h7l-7 7z"/><path d="M1526 618h7l-7 7z"/><path d="M1350 648h7l-7 7z"/><path d="M1526 648h7l-7 7z"/><path d="M1350 678h7l-7 7z"/><path d="M1526 678h7l-7 7z"/><path d="M1350 708h7l-7 7z"/><path d="M1526 708h7l-7 7z"/><path d="M1350 738h7l-7 7z"/><path d="M1526 738h7l-7 7z"/><path d="M1350 768h7l-7 7z"/><path d="M1526 768h7l-7 7z"/><path d="M1350 798h7l-7 7z"/><path d="M1526 798h7l-7 7z"/><path d="M1350 828h7l-7 7z"/><path d="M1526 828h7l-7 7z"/><path d="M1350 858h7l-7 7z"/><path d="M1526 858h7l-7 7z"/><path d="M1350 888h7l-7 7z"/><path d="M1526 888h7l-7 7z"/><path d="M1350 918h7l-7 7z"/><path d="M1526 918h7l-7 7z"/><path d="M1350 948h7l-7 7z"/><path d="M1526 948h7l-7 7z"/></svg>
<div class="a" style="left:357px;top:826px;width:91px;height:33px;border:2px solid #217346"></div>
<div class="a" style="left:444px;top:854px;width:7px;height:7px;background:#217346;border:1px solid #fff;border-right:none;border-bottom:none"></div>
</div>
<div class="a" style="left:1895px;top:258px;width:25px;height:717px;background:#e6e6e6"></div>
<div class="a" style="left:1894px;top:288px;width:1px;height:688px;background:#9e9e9e"></div>
<div class="a" style="left:1898px;top:314px;width:19px;height:643px;background:#d9d9d9"></div>
<div class="a" style="left:1898px;top:260px;width:19px;height:19px;background:#fff;border:1px solid #b4b4b4"></div>
<svg style="left:1903px;top:266px" width="9" height="6" viewBox="0 0 9 6"><path d="M0 5.5L4.5 0.5L9 5.5Z" fill="#777"/></svg>
<div class="a" style="left:1898px;top:280px;width:19px;height:34px;background:#fff;border:1px solid #b4b4b4"></div>
<div class="a" style="left:0px;top:975px;width:1920px;height:29px;background:#e6e6e6;border-bottom:1px solid #cfcfcf"></div>
<div class="a" style="left:0px;top:975px;width:1895px;height:1px;background:#a6a6a6"></div>
<div class="a" style="left:1898px;top:957px;width:19px;height:19px;background:#fff;border:1px solid #b4b4b4"></div>
<svg style="left:1903px;top:964px" width="9" height="6" viewBox="0 0 9 6"><path d="M0 0.5L4.5 5.5L9 0.5Z" fill="#777"/></svg>
<svg style="left:27px;top:985px" width="7" height="10" viewBox="0 0 7 10"><path d="M6.5 0.4V9.6L0.6 5Z" fill="#217346"/></svg>
<svg style="left:56px;top:985px" width="7" height="10" viewBox="0 0 7 10"><path d="M0.5 0.4V9.6L6.4 5Z" fill="#217346"/></svg>
<div class="a" style="left:80.5px;top:990px;width:2px;height:2px;background:#217346"></div>
<div class="a" style="left:85.5px;top:990px;width:2px;height:2px;background:#217346"></div>
<div class="a" style="left:90.5px;top:990px;width:2px;height:2px;background:#217346"></div>
<div class="a" style="left:100px;top:975px;width:118px;height:25px;background:#fff"></div>
<div class="a" style="left:102.5px;top:977px;width:113px;height:20.5px;background:linear-gradient(#ffffff 10%,#ffd9d9 55%,#ff9c9c 100%)"></div>
<div class="a" style="left:100px;top:997px;width:118px;height:3px;background:#217346"></div>
<span class="t" id="t59" style="left:115.1px;top:974.0px;font-size:17.5px;line-height:24px;color:#217346;transform:scaleX(0.8703);">マザーズ指標</span>
<div class="a" style="left:220px;top:978px;width:55px;height:22px;background:#ff0000"></div>
<span class="t" id="t60" style="left:229.0px;top:974.0px;font-size:17.5px;line-height:24px;color:#fff;transform:scaleX(1.0147);">JAQ</span>
<div class="a" style="left:277.5px;top:979px;width:1px;height:20px;background:#ababab"></div>
<div class="a" style="left:280px;top:978px;width:77px;height:22px;background:#ff0000"></div>
<span class="t" id="t61" style="left:291.0px;top:974.0px;font-size:17.5px;line-height:24px;color:#fff;transform:scaleX(1.0094);">TOPIX</span>
<div class="a" style="left:359.5px;top:979px;width:1px;height:20px;background:#ababab"></div>
<div class="a" style="left:362px;top:978px;width:160px;height:22px;background:#ffc000"></div>
<span class="t" id="t62" style="left:370.5px;top:974.0px;font-size:17.5px;line-height:24px;color:#262626;transform:scaleX(1.0035);">個別&nbsp;&nbsp;騰落率&nbsp;&nbsp;推移</span>
<div class="a" style="left:524.5px;top:979px;width:1px;height:20px;background:#ababab"></div>
<div class="a" style="left:527px;top:978px;width:87px;height:22px;background:#ffc000"></div>
<span class="t" id="t63" style="left:535.5px;top:974.0px;font-size:17.5px;line-height:24px;color:#262626;transform:scaleX(0.9857);">東証一部</span>
<div class="a" style="left:616.5px;top:979px;width:1px;height:20px;background:#ababab"></div>
<div class="a" style="left:619px;top:978px;width:87px;height:22px;background:#ffc000"></div>
<span class="t" id="t64" style="left:627.5px;top:974.0px;font-size:17.5px;line-height:24px;color:#262626;transform:scaleX(0.9857);">東証二部</span>
<div class="a" style="left:708.5px;top:979px;width:1px;height:20px;background:#ababab"></div>
<div class="a" style="left:711px;top:978px;width:41.5px;height:22px;background:#ffc000"></div>
<span class="t" id="t65" style="left:719.5px;top:974.0px;font-size:17.5px;line-height:24px;color:#262626;transform:scaleX(1.0455);">JQ</span>
<div class="a" style="left:755.0px;top:979px;width:1px;height:20px;background:#ababab"></div>
<div class="a" style="left:758px;top:978px;width:78px;height:22px;background:#ffc000"></div>
<span class="t" id="t66" style="left:767.5px;top:974.0px;font-size:17.5px;line-height:24px;color:#262626;transform:scaleX(0.9091);">マザーズ</span>
<div class="a" style="left:838.5px;top:979px;width:1px;height:20px;background:#ababab"></div>
<span class="t" id="t67" style="left:860.5px;top:974.0px;font-size:17.5px;line-height:24px;color:#444;transform:scaleX(0.9714);">個別</span>
<span class="t" id="t68" style="left:906.0px;top:974.0px;font-size:17.5px;line-height:24px;color:#444;transform:scaleX(0.9528);">日統計</span>
<span class="t" id="t69" style="left:967.5px;top:974.0px;font-size:17.5px;line-height:24px;color:#444;transform:scaleX(0.9623);">左統計</span>
<div class="a" style="left:1031px;top:979px;width:1px;height:20px;background:#ababab"></div>
<span class="t" id="t70" style="left:1043.0px;top:974.0px;font-size:17.5px;line-height:24px;color:#444;transform:scaleX(0.9571);">個別</span>
<div class="a" style="left:1088.5px;top:990px;width:2px;height:2px;background:#217346"></div>
<div class="a" style="left:1093.5px;top:990px;width:2px;height:2px;background:#217346"></div>
<div class="a" style="left:1098.5px;top:990px;width:2px;height:2px;background:#217346"></div>
<svg style="left:1112px;top:979px" width="20" height="20" viewBox="0 0 20 20"><circle cx="10" cy="10" r="9.2" fill="none" stroke="#777" stroke-width="1.1"/><path d="M10 5V15M5 10H15" stroke="#777" stroke-width="1.3"/></svg>
<div class="a" style="left:1148px;top:983px;width:2.5px;height:2.5px;background:#a6a6a6"></div>
<div class="a" style="left:1148px;top:988.5px;width:2.5px;height:2.5px;background:#a6a6a6"></div>
<div class="a" style="left:1148px;top:994px;width:2.5px;height:2.5px;background:#a6a6a6"></div>
<div class="a" style="left:1166px;top:980px;width:729px;height:19px;background:#d9d9d9"></div>
<div class="a" style="left:1166px;top:980px;width:19px;height:19px;background:#fff;border:1px solid #b4b4b4"></div>
<svg style="left:1172px;top:985px" width="6" height="9" viewBox="0 0 6 9"><path d="M5.5 0V9L0.5 4.5Z" fill="#666"/></svg>
<div class="a" style="left:1184px;top:980px;width:659px;height:19px;background:#fff;border:1px solid #b4b4b4"></div>
<div class="a" style="left:1876px;top:980px;width:19px;height:19px;background:#fff;border:1px solid #b4b4b4"></div>
<svg style="left:1883px;top:985px" width="6" height="9" viewBox="0 0 6 9"><path d="M0.5 0V9L5.5 4.5Z" fill="#666"/></svg>
<div class="a" style="left:0px;top:1004px;width:1920px;height:26px;background:#f3f3f3"></div>
<span class="t" id="t71" style="left:9.0px;top:1008.0px;font-size:15.5px;line-height:22px;color:#444;transform:scaleX(0.9597);">準備完了</span>
<div class="a" style="left:1538px;top:1004px;width:50px;height:26px;background:#c6c6c6"></div>
<svg style="left:1554px;top:1009px" width="17" height="16" viewBox="0 0 17 16"><path d="M0.6 0.6H16.4V15.4H0.6ZM0.6 5.5H16.4M0.6 10.5H16.4M5.8 0.6V15.4M11.2 0.6V15.4" fill="none" stroke="#6a6a6a" stroke-width="1.2"/></svg>
<svg style="left:1604px;top:1009px" width="17" height="16" viewBox="0 0 17 16"><path d="M0.5 0.5H16.5V15.5H0.5Z" fill="none" stroke="#666" stroke-width="1"/><path d="M4 3.5H13V12.5H4ZM6 6H11M6 8H11M6 10H11" fill="none" stroke="#666" stroke-width="1"/></svg>
<svg style="left:1654px;top:1009px" width="17" height="16" viewBox="0 0 17 16"><path d="M0.5 0.5H16.5V15.5H0.5ZM5.8 0.5V9H11.2V0.5M0.5 9H5.8" fill="none" stroke="#666" stroke-width="1"/></svg>
<div class="a" style="left:1695px;top:1016.5px;width:10px;height:1.3px;background:#666"></div>
<div class="a" style="left:1711px;top:1017px;width:124px;height:1px;background:#a0a0a0"></div>
<div class="a" style="left:1771px;top:1010px;width:5px;height:14px;background:#666"></div>
<div class="a" style="left:1842px;top:1016.5px;width:10px;height:1.3px;background:#666"></div>
<div class="a" style="left:1846.4px;top:1012px;width:1.3px;height:10px;background:#666"></div>
<span class="t" id="t72" style="left:1868.5px;top:1007.0px;font-size:15.5px;line-height:22px;color:#444;transform:scaleX(1.0375);">100%</span>
<div class="a" style="left:0px;top:1030px;width:1920px;height:50px;background:linear-gradient(90deg,#f4e6d0 0%,#f2e3d0 30%,#efdfd4 62%,#f0ddd5 100%)"></div>
<div class="a" style="left:61px;top:1031px;width:429px;height:49px;background:#fff;border:1px solid #d6d6d6;border-bottom:1px solid #cfcfcf"></div>
<svg style="left:20px;top:1045px" width="20" height="20" viewBox="0 0 20 20"><path d="M0 2.9L8.2 1.8V9.6H0ZM9.2 1.6L20 0V9.6H9.2ZM0 10.6H8.2V18.3L0 17.2ZM9.2 10.6H20V20L9.2 18.5Z" fill="#000"/></svg>
<svg style="left:75px;top:1045px" width="20" height="20" viewBox="0 0 20 20"><circle cx="12.6" cy="7.4" r="6.4" fill="none" stroke="#222" stroke-width="1.6"/><path d="M8 12L0.8 19.2" stroke="#222" stroke-width="1.8"/></svg>
<span class="t" id="t73" style="left:110.5px;top:1042.0px;font-size:18.5px;line-height:26px;color:#333;transform:scaleX(0.9038);">ここに入力して検索</span>
<svg style="left:509px;top:1044px" width="22" height="22" viewBox="0 0 22 22"><circle cx="11" cy="11" r="8.4" fill="none" stroke="#111" stroke-width="2.6"/></svg>
<svg style="left:569px;top:1044px" width="22" height="21" viewBox="0 0 22 21"><path d="M1 0.5V4M14 0.5V4M1 17V20.5M14 17V20.5M0.5 3.4H14.5M0.5 17.4H14.5" fill="none" stroke="#111" stroke-width="1.2"/><rect x="1" y="6.6" width="13" height="7.6" fill="none" stroke="#111" stroke-width="1.3"/><path d="M19.4 0.5V6M19.4 10.4V20.5" stroke="#111" stroke-width="1.2"/><rect x="17.8" y="6.6" width="3" height="3" fill="#111"/></svg>
<svg style="left:630px;top:1042px" width="28" height="24" viewBox="0 0 28 24"><path d="M0 2.4C0 1.2 0.8 0.4 2 0.4H11.4L13 3.4H27.4V21.6H0Z" fill="#f7c64b"/><path d="M0 0.4H11.6L13.2 3.6H0Z" fill="#e3a31c"/><rect x="0" y="4.6" width="27.4" height="17" rx="1" fill="#fbd867"/><path d="M5 23.4V14.4C5 13.2 5.8 12.6 7 12.6H20.4C21.6 12.6 22.4 13.2 22.4 14.4V23.4H17.4V17.6H10V23.4Z" fill="#3c8fe0"/></svg>
<svg style="left:691px;top:1040px" width="29" height="30" viewBox="0 0 29 30"><path d="M8 8V4.6C8 2.6 9.4 1.4 11.4 1.4H17.6C19.6 1.4 21 2.6 21 4.6V8" fill="none" stroke="#2b2b2b" stroke-width="2.4"/><rect x="0" y="8" width="29" height="22" rx="1.6" fill="#2b2b2b"/><rect x="9" y="14" width="5" height="5" fill="#f25022"/><rect x="15" y="14" width="5" height="5" fill="#7fba00"/><rect x="9" y="20" width="5" height="5" fill="#00a4ef"/><rect x="15" y="20" width="5" height="5" fill="#ffb900"/></svg>
<svg style="left:753px;top:1041px" width="30" height="28" viewBox="0 0 30 28"><path d="M0 9.6L15 0L30 9.6V28H0Z" fill="#0a63b8"/><path d="M3.4 9.6H26.6V20H3.4Z" fill="#fff"/><path d="M3.4 9.6H26.6L15 18Z" fill="#dfe7f0"/><path d="M0 9.6L15 20L30 9.6V28H0Z" fill="#2fa8ea"/><path d="M0 28L15 20L30 28Z" fill="#1c86d6"/></svg>
<svg style="left:815px;top:1040px" width="30" height="30" viewBox="0 0 30 30"><rect width="30" height="30" fill="#ff5a2c"/><circle cx="15" cy="15" r="11.4" fill="#fff"/><circle cx="15" cy="13" r="5.4" fill="#ffd9cc" stroke="#ff5a2c" stroke-width="1.6"/><path d="M6.4 23.4C8 19 22 19 23.6 23.4C21 27 9 27 6.4 23.4Z" fill="#ff5a2c"/><path d="M9 13A6 6 0 0 1 21 13" fill="none" stroke="#ff5a2c" stroke-width="2"/></svg>
<svg style="left:878px;top:1041px" width="27" height="27" viewBox="0 0 27 27"><rect width="27" height="27" rx="5" fill="#3d46e6"/><rect x="0" y="17" width="27" height="10" rx="4" fill="#2a2fb4"/><text x="13.5" y="16" font-size="17" font-weight="bold" fill="#fff" text-anchor="middle" font-family="Liberation Sans,sans-serif">@</text><text x="13.5" y="24.4" font-size="7" fill="#dfe2ff" text-anchor="middle" font-family="Liberation Sans,sans-serif">menu</text></svg>
<svg style="left:938px;top:1039px" width="32" height="32" viewBox="0 0 32 32"><defs><linearGradient id="eg1" x1="0" y1="0.2" x2="1" y2="0.6"><stop offset="0" stop-color="#2fb8ee"/><stop offset="0.5" stop-color="#2cc9a2"/><stop offset="1" stop-color="#7adf4a"/></linearGradient><linearGradient id="eg2" x1="0" y1="0" x2="1" y2="1"><stop offset="0" stop-color="#1b83d8"/><stop offset="1" stop-color="#0c4f9e"/></linearGradient></defs><path d="M1 14C2.4 6 8.6 0.6 16 0.6C25 0.6 31.4 7.4 31.4 14.6C31.4 19.4 27.8 22.6 23.8 22.6C20.8 22.6 19 21 19 19.2C19 17.8 20.4 17 20.4 15C20.4 12 17.6 9.8 13.8 9.8C7.8 9.8 2.6 13.4 1 19Z" fill="url(#eg1)"/><path d="M0.8 17.4C0.8 25.6 7.2 31.4 15.2 31.4C20.4 31.4 25 29 28.4 24.6C24.6 27.4 19 27.4 15.4 23.8C12.6 21 12.4 17.2 14.4 14.8C14.6 12 12 10 9 10.4C4 11 0.8 14 0.8 17.4Z" fill="url(#eg2)"/><path d="M14.4 14.8C12.4 17.2 12.6 21 15.4 23.8C19 27.4 24.6 27.4 28.4 24.6C29.4 23.4 30 22.4 30.6 21C28.6 22.4 26 23 23.8 22.6C20.8 22.6 19 21 19 19.2C19 17.8 20.4 17 20.4 15C18 13.4 15.6 13.6 14.4 14.8Z" fill="#1568b8"/></svg>
<div class="a" style="left:986px;top:1030px;width:56px;height:47px;background:rgba(255,255,255,0.45)"></div>
<div class="a" style="left:1042px;top:1030px;width:4px;height:47px;background:rgba(255,255,255,0.2)"></div>
<svg style="left:1000px;top:1040px" width="30" height="29" viewBox="0 0 30 29"><rect x="8" y="0.6" width="22" height="27.6" rx="1.6" fill="#21a366"/><rect x="19" y="0.6" width="11" height="7" fill="#33c481"/><rect x="8" y="7.6" width="11" height="7" fill="#107c41"/><rect x="19" y="14.4" width="11" height="7" fill="#107c41"/><rect x="8" y="14.4" width="11" height="13.8" fill="#185c37"/><rect x="19" y="21.2" width="11" height="7" fill="#185c37"/><rect x="0" y="6.6" width="16" height="16" rx="1.4" fill="#107c41"/><path d="M4.4 10.4L11.6 19M11.6 10.4L4.4 19" stroke="#fff" stroke-width="2.2"/></svg>
<svg style="left:1062px;top:1040px" width="30" height="29" viewBox="0 0 30 29"><rect x="8" y="0.6" width="22" height="27.6" rx="1.6" fill="#41a5ee"/><rect x="8" y="7.6" width="22" height="7" fill="#2b7cd3"/><rect x="8" y="14.4" width="22" height="7" fill="#185abd"/><rect x="8" y="21.2" width="22" height="7" fill="#103f91"/><rect x="0" y="6.6" width="16" height="16" rx="1.4" fill="#185abd"/><path d="M3.4 10.4L5.6 19L8 12L10.4 19L12.6 10.4" fill="none" stroke="#fff" stroke-width="1.8"/></svg>
<div class="a" style="left:929px;top:1077px;width:51px;height:3px;background:#0f78d4"></div>
<div class="a" style="left:986px;top:1077px;width:60px;height:3px;background:#0f78d4"></div>
<div class="a" style="left:1053px;top:1077px;width:51px;height:3px;background:#0f78d4"></div>
<svg style="left:1386px;top:1043px" width="26" height="24" viewBox="0 0 26 24"><defs><linearGradient id="sung" x1="0.15" y1="0.1" x2="0.85" y2="0.9"><stop offset="0" stop-color="#ffe75a"/><stop offset="0.55" stop-color="#ffc62e"/><stop offset="1" stop-color="#ff9a0a"/></linearGradient><linearGradient id="cldg" x1="0" y1="0" x2="0" y2="1"><stop offset="0" stop-color="#eef8ff"/><stop offset="1" stop-color="#a9d6f2"/></linearGradient></defs><circle cx="11.5" cy="12.4" r="11.2" fill="url(#sung)"/><path d="M12.6 19C8.6 19 8.2 14.6 11.4 13.8C11.6 9.8 16.8 8.6 18.6 11.6C21.4 9.6 25 12 24 14.6C26.6 15 26.2 19 23.4 19Z" fill="url(#cldg)"/></svg>
<span class="t" id="t74" style="left:1423.0px;top:1043.0px;font-size:18.5px;line-height:26px;color:#222;transform:scaleX(0.9073);">31°C</span>
<span class="t" id="t75" style="left:1471.5px;top:1043.0px;font-size:18px;line-height:26px;color:#222;transform:scaleX(0.8596);">晴れのちくもり</span>
<svg style="left:1591px;top:1050px" width="16" height="10" viewBox="0 0 16 10"><path d="M0.8 9L8 1.4L15.2 9" fill="none" stroke="#222" stroke-width="1.5"/></svg>
<svg style="left:1619px;top:1047px" width="21" height="15" viewBox="0 0 21 15"><path d="M5 14.4C1.6 14.4 0.2 10.6 3 8.8C2.6 5.6 6 3.6 8.4 5.4C10 1.2 16 1.6 16.8 6.2C20.6 6.4 21.4 11.4 18.6 13.4C18 14 17 14.4 16 14.4Z" fill="#8a8a8a" stroke="#222" stroke-width="1.1"/><path d="M2.6 9.4L16.4 6.2" stroke="#222" stroke-width="0.9"/></svg>
<svg style="left:1648px;top:1049px" width="22" height="12" viewBox="0 0 22 12"><rect x="5.5" y="1.2" width="14" height="9.6" fill="none" stroke="#222" stroke-width="1.2"/><rect x="7.4" y="3.2" width="10.2" height="5.6" fill="#222"/><rect x="19.8" y="4" width="1.8" height="4" fill="#222"/><path d="M0.6 0.6V3.4M3.4 0.6V3.4M0 3.4H4V6L2 7.6V11" fill="none" stroke="#222" stroke-width="1"/></svg>
<svg style="left:1682px;top:1047px" width="17" height="16" viewBox="0 0 17 16"><path d="M1 15C1 7 7 1 15.6 1" fill="none" stroke="#222" stroke-width="1.2"/><path d="M4.8 15C4.8 9.4 9.4 4.8 15.6 4.8" fill="none" stroke="#888" stroke-width="1.2"/><path d="M8.6 15C8.6 11.4 11.4 8.6 15.6 8.6" fill="none" stroke="#888" stroke-width="1.2"/><circle cx="13.6" cy="13.4" r="1.6" fill="#222"/></svg>
<svg style="left:1708px;top:1047px" width="22" height="16" viewBox="0 0 22 16"><path d="M0.8 5.4H4.4L9 1V15L4.4 10.6H0.8Z" fill="none" stroke="#222" stroke-width="1.2"/><path d="M12 5.6C13 7 13 9 12 10.4" fill="none" stroke="#222" stroke-width="1.1"/><path d="M14.8 3.6C16.6 6 16.6 10 14.8 12.4" fill="none" stroke="#222" stroke-width="1.1"/><path d="M17.8 1.6C20.6 5 20.6 11 17.8 14.4" fill="none" stroke="#999" stroke-width="1.1"/></svg>
<span class="t" id="t76" style="left:1737.0px;top:1040.0px;font-size:21.5px;line-height:30px;color:#111;transform:scaleX(0.9524);font-weight:500;">あ</span>
<span class="t" id="t77" style="left:1790.5px;top:1033.0px;font-size:15.5px;line-height:22px;color:#222;transform:scaleX(0.8718);">16:43</span>
<span class="t" id="t78" style="left:1770.0px;top:1056.0px;font-size:15.5px;line-height:22px;color:#222;transform:scaleX(0.9731);">2021/07/17</span>
<svg style="left:1868px;top:1045px" width="21" height="20" viewBox="0 0 21 20"><path d="M0.8 0.8H20V17H12.6L10.4 19.2L8.2 17H0.8Z" fill="none" stroke="#222" stroke-width="1.3"/></svg>
<div class="a" style="left:1914.5px;top:1030px;width:1px;height:50px;background:#c9b9ad"></div>
</body></html>
